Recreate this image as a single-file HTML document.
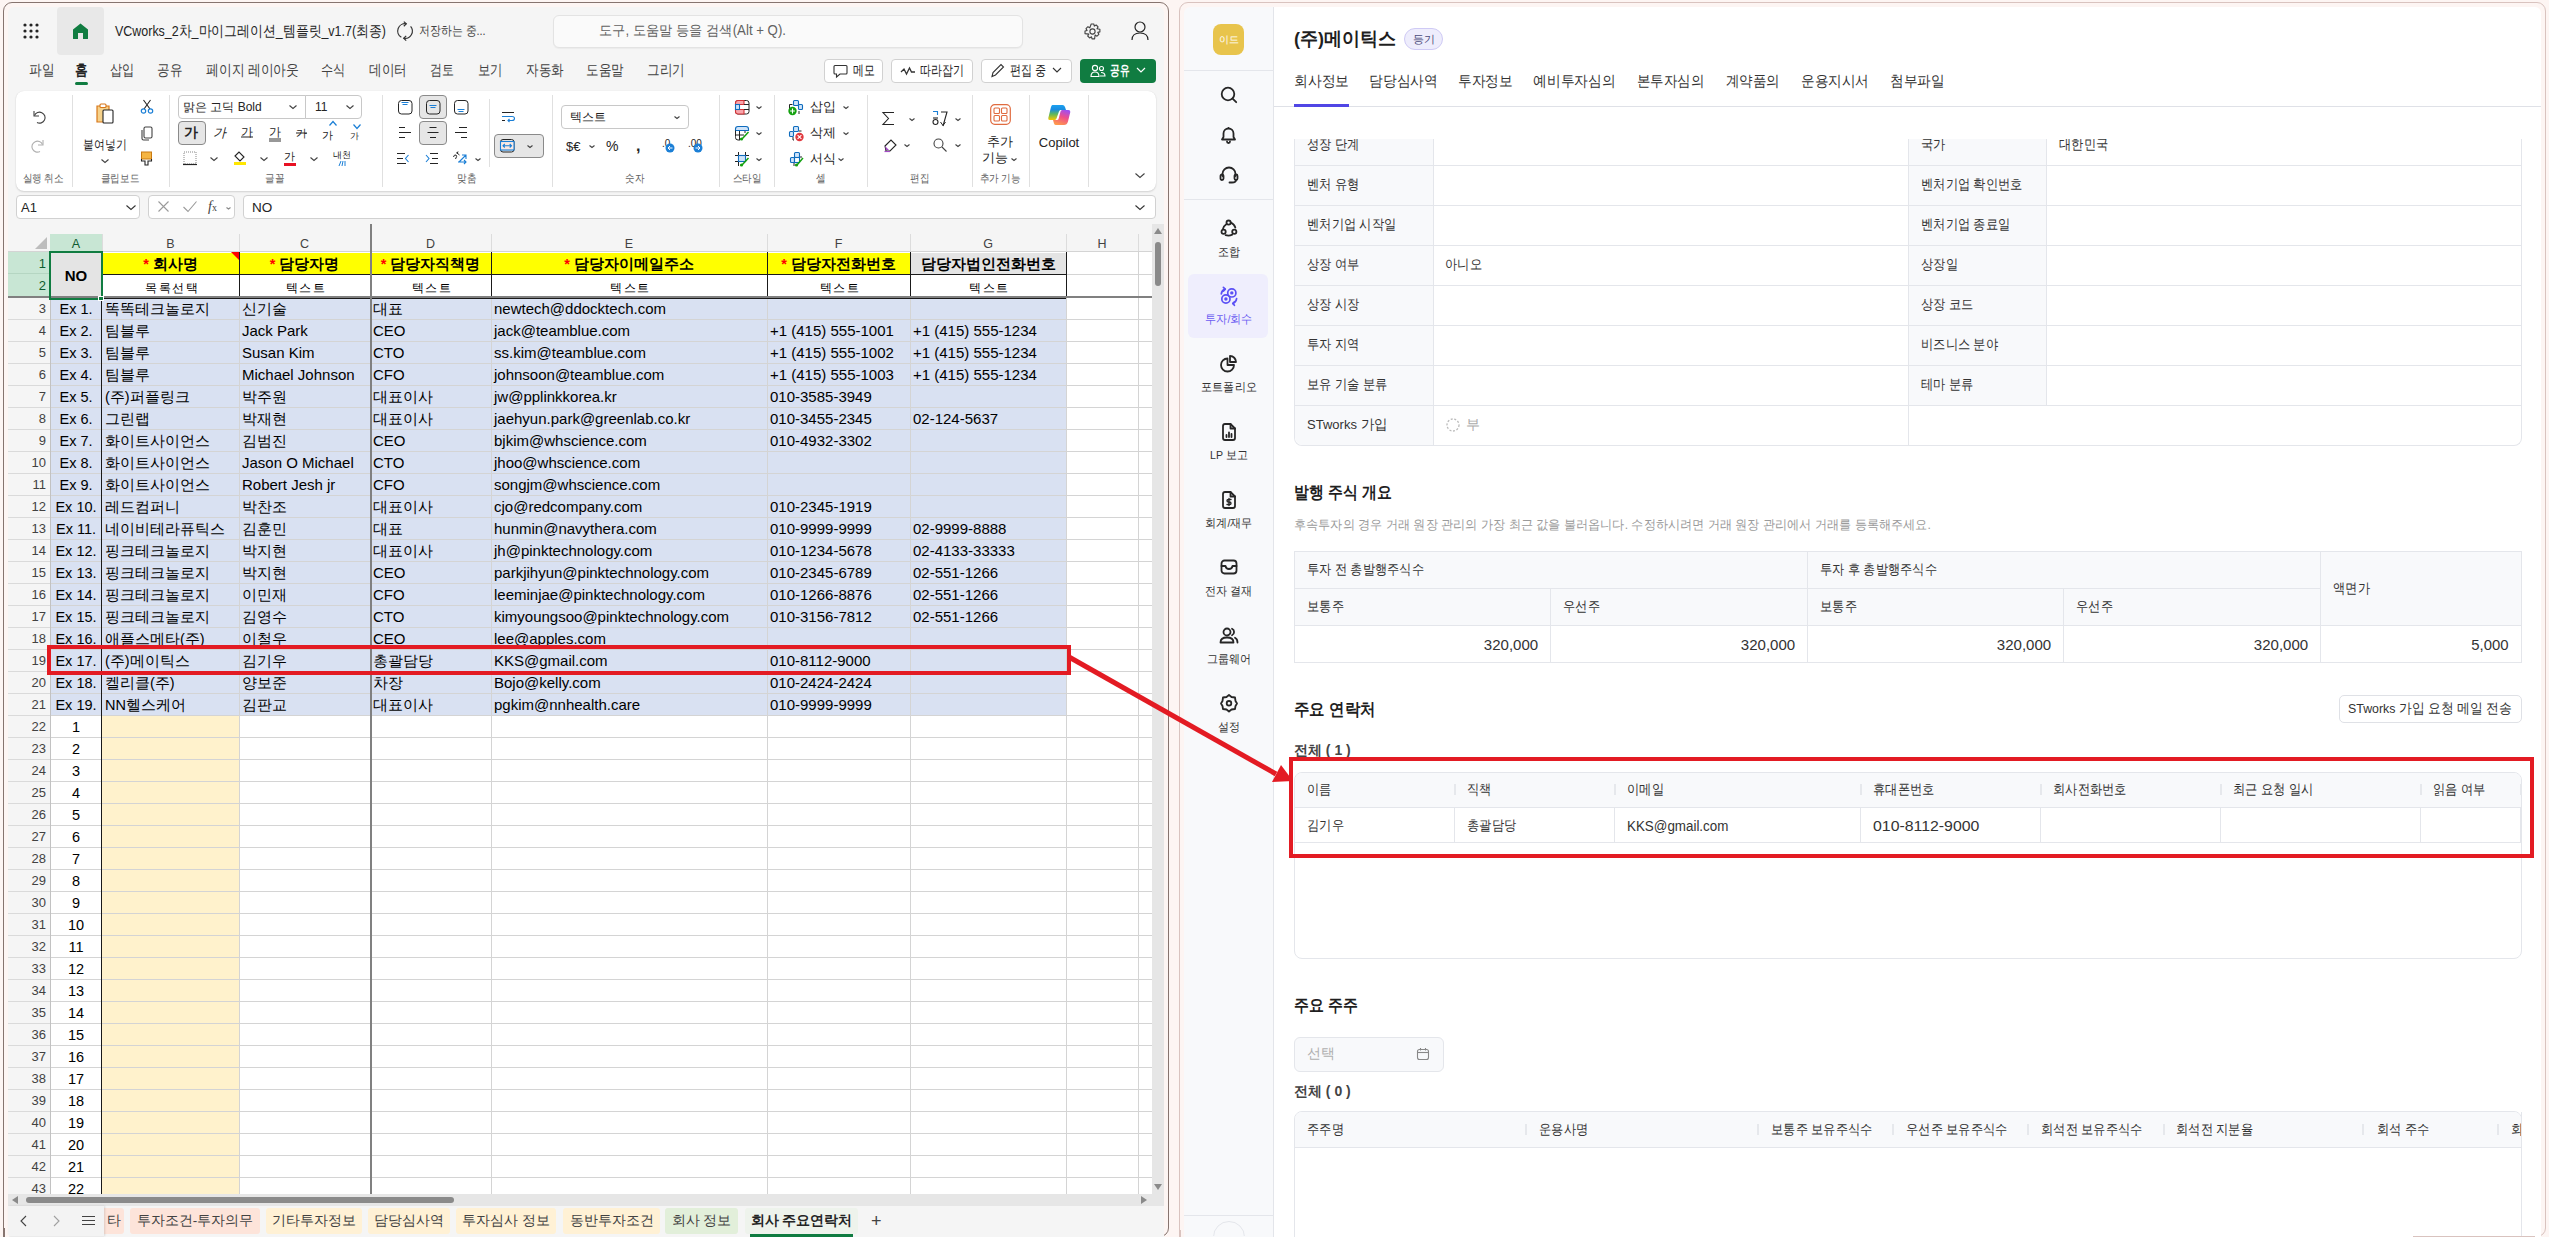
<!DOCTYPE html><html lang="ko"><head><meta charset="utf-8"><style>
*{box-sizing:border-box;margin:0;padding:0}
html,body{width:2549px;height:1237px;overflow:hidden;background:#fdf5f3;font-family:"Liberation Sans",sans-serif;color:#242424}
.a{position:absolute;white-space:nowrap}
svg{position:absolute;overflow:visible}
#rp{position:absolute;left:1179px;top:2px;width:1367px;height:1235px;border:1.5px solid #d9c3bf;border-radius:9px 9px 9px 0;background:#fdf5f3}
#side{position:absolute;left:1184px;top:7px;width:90px;height:1230px;background:#f8f9fb;border-right:1px solid #e3e5ea;border-top-left-radius:6px}
#main{position:absolute;left:1274px;top:7px;width:1267px;height:1230px;background:#fff;border-top-right-radius:6px}
.sl{font-size:11.5px;color:#333;line-height:14px;text-align:center;width:90px;left:1184px}
</style></head><body>
<div id="rp"></div><div id="side"></div><div id="main"></div>
<div class="a" style="left:1184px;top:70px;width:90px;height:1px;background:#e4e6eb"></div>
<div class="a" style="left:1184px;top:199px;width:90px;height:1px;background:#e4e6eb"></div>
<div class="a" style="left:1184px;top:1215px;width:90px;height:1px;background:#e4e6eb"></div>
<div class="a" style="left:1213px;top:24px;width:31px;height:31px;border-radius:8px;background:#e8c44c;color:#fff;font-size:10px;line-height:31px;text-align:center">이드</div>
<div class="a" style="left:1188px;top:274px;width:80px;height:64px;border-radius:6px;background:#efeefd"></div>
<div class="a sl" style="top:245px;color:#333;transform:scaleX(0.92)">조합</div>
<div class="a sl" style="top:312px;color:#6b5cf2;transform:scaleX(0.92)">투자/회수</div>
<div class="a sl" style="top:380px;color:#333;transform:scaleX(0.92)">포트폴리오</div>
<div class="a sl" style="top:448px;color:#333;transform:scaleX(0.92)">LP 보고</div>
<div class="a sl" style="top:516px;color:#333;transform:scaleX(0.92)">회계/재무</div>
<div class="a sl" style="top:584px;color:#333;transform:scaleX(0.92)">전자 결재</div>
<div class="a sl" style="top:652px;color:#333;transform:scaleX(0.92)">그룹웨어</div>
<div class="a sl" style="top:720px;color:#333;transform:scaleX(0.92)">설정</div>
<svg style="left:1220px;top:86px" width="18" height="18"><circle cx="8" cy="8" r="6.3" fill="none" stroke="#262626" stroke-width="1.8" stroke-linecap="round" stroke-linejoin="round"/><path d="M12.6 12.6 L16.2 16.2" fill="none" stroke="#262626" stroke-width="1.8" stroke-linecap="round" stroke-linejoin="round"/></svg>
<svg style="left:1220px;top:126px" width="18" height="18"><path d="M2 13.5 H15 L13.5 11 V7.5 A5 5 0 0 0 3.5 7.5 V11 Z" fill="none" stroke="#262626" stroke-width="1.8" stroke-linecap="round" stroke-linejoin="round"/><path d="M7 15.5 A1.5 1.5 0 0 0 10 15.5" fill="none" stroke="#262626" stroke-width="1.8" stroke-linecap="round" stroke-linejoin="round"/><circle cx="8.5" cy="2" r="0.9" fill="#262626"/></svg>
<svg style="left:1219px;top:166px" width="20" height="18"><path d="M3.5 10 V8 A6.5 6.5 0 0 1 16.5 8 V10" fill="none" stroke="#262626" stroke-width="1.8" stroke-linecap="round" stroke-linejoin="round"/><rect x="1.5" y="8.5" width="3" height="5.5" rx="1.5" fill="none" stroke="#262626" stroke-width="1.8" stroke-linecap="round" stroke-linejoin="round"/><rect x="15.5" y="8.5" width="3" height="5.5" rx="1.5" fill="none" stroke="#262626" stroke-width="1.8" stroke-linecap="round" stroke-linejoin="round"/><path d="M17 14 Q17 16.5 13 16.5 H10.5" fill="none" stroke="#262626" stroke-width="1.8" stroke-linecap="round" stroke-linejoin="round"/></svg>
<svg style="left:1220px;top:219px" width="18" height="18"><circle cx="8.6" cy="3.6" r="2.1" fill="none" stroke="#262626" stroke-width="1.8" stroke-linecap="round" stroke-linejoin="round"/><circle cx="3.6" cy="12.7" r="2.1" fill="none" stroke="#262626" stroke-width="1.8" stroke-linecap="round" stroke-linejoin="round"/><circle cx="14.3" cy="12.7" r="2.1" fill="none" stroke="#262626" stroke-width="1.8" stroke-linecap="round" stroke-linejoin="round"/><path d="M10.8 3.6 Q14.3 5 15.3 8.6" fill="none" stroke="#262626" stroke-width="1.8" stroke-linecap="round" stroke-linejoin="round"/><path d="M6.3 5.2 Q3.2 7.2 2.8 10.4" fill="none" stroke="#262626" stroke-width="1.8" stroke-linecap="round" stroke-linejoin="round"/><path d="M5.6 16.1 Q9 17.2 12.2 15.6" fill="none" stroke="#262626" stroke-width="1.8" stroke-linecap="round" stroke-linejoin="round"/></svg>
<svg style="left:1220px;top:287px" width="18" height="18"><g fill="none" stroke="#5b50f5" stroke-width="1.7" stroke-linecap="round" stroke-linejoin="round"><circle cx="11.8" cy="5.9" r="4.1"/><circle cx="5.9" cy="12" r="4.1"/><path d="M1.3 6.8 Q1.8 3 5 2"/><path d="M3.4 0.4 L5.3 2.1 L3.6 4"/><path d="M16.6 11.5 Q16.2 15.3 13 16.5"/><path d="M14.7 14.6 L12.8 16.4 L14.4 18.3"/></g><circle cx="11.8" cy="5.9" r="1.7" fill="#5b50f5"/><circle cx="5.9" cy="12" r="1.7" fill="#5b50f5"/></svg>
<svg style="left:1220px;top:355px" width="18" height="18"><path d="M7.5 3.5 A6.5 6.5 0 1 0 14 10 H7.5 Z" fill="none" stroke="#262626" stroke-width="1.8" stroke-linecap="round" stroke-linejoin="round"/><path d="M10 1 A6 6 0 0 1 16 7 H10 Z" fill="none" stroke="#262626" stroke-width="1.8" stroke-linecap="round" stroke-linejoin="round"/></svg>
<svg style="left:1221px;top:423px" width="16" height="18"><path d="M2 3 Q2 1 4 1 H9.5 L14 5.5 V15 Q14 17 12 17 H4 Q2 17 2 15 Z" fill="none" stroke="#262626" stroke-width="1.8" stroke-linecap="round" stroke-linejoin="round"/><path d="M9.5 1 V5.5 H14" fill="none" stroke="#262626" stroke-width="1.8" stroke-linecap="round" stroke-linejoin="round"/><path d="M5.5 14 V12 M8 14 V9.5 M10.5 14 V11" fill="none" stroke="#262626" stroke-width="1.8" stroke-linecap="round" stroke-linejoin="round"/></svg>
<svg style="left:1221px;top:491px" width="16" height="18"><path d="M2 3 Q2 1 4 1 H9.5 L14 5.5 V15 Q14 17 12 17 H4 Q2 17 2 15 Z" fill="none" stroke="#262626" stroke-width="1.8" stroke-linecap="round" stroke-linejoin="round"/><path d="M9.5 1 V5.5 H14" fill="none" stroke="#262626" stroke-width="1.8" stroke-linecap="round" stroke-linejoin="round"/><path d="M10 8.5 H7.3 Q6 8.5 6 9.7 Q6 11 7.5 11 H8.5 Q10 11 10 12.3 Q10 13.5 8.7 13.5 H6 M8 7.5 V14.5" fill="none" stroke="#262626" stroke-width="1.4" stroke-linecap="round"/></svg>
<svg style="left:1220px;top:559px" width="18" height="16"><rect x="1.5" y="1.5" width="15" height="13" rx="3" fill="none" stroke="#262626" stroke-width="1.8" stroke-linecap="round" stroke-linejoin="round"/><path d="M1.5 7 H5.5 Q6 10 9 10 Q12 10 12.5 7 H16.5" fill="none" stroke="#262626" stroke-width="1.8" stroke-linecap="round" stroke-linejoin="round"/></svg>
<svg style="left:1219px;top:627px" width="20" height="17"><circle cx="8" cy="5" r="3.5" fill="none" stroke="#262626" stroke-width="1.8" stroke-linecap="round" stroke-linejoin="round"/><path d="M1.5 15.5 Q1.5 10.5 8 10.5 Q14.5 10.5 14.5 15.5 Z" fill="none" stroke="#262626" stroke-width="1.8" stroke-linecap="round" stroke-linejoin="round"/><path d="M13 1.8 A3.5 3.5 0 0 1 13 8.2" fill="none" stroke="#262626" stroke-width="1.8" stroke-linecap="round" stroke-linejoin="round"/><path d="M16 10.8 Q18.5 12 18.5 15.5" fill="none" stroke="#262626" stroke-width="1.8" stroke-linecap="round" stroke-linejoin="round"/></svg>
<svg style="left:1220px;top:694px" width="18" height="18"><path d="M9 1 L11.5 3 L15 3.5 L15.5 7 L17 9.5 L15.5 12 L15 15 L11.5 15.5 L9 17.5 L6.5 15.5 L3 15 L2.5 12 L1 9.5 L2.5 7 L3 3.5 L6.5 3 Z" fill="none" stroke="#262626" stroke-width="1.8" stroke-linecap="round" stroke-linejoin="round"/><circle cx="9" cy="9.3" r="2.3" fill="none" stroke="#262626" stroke-width="1.8" stroke-linecap="round" stroke-linejoin="round"/></svg>
<div class="a" style="left:1184px;top:1216px;width:89px;height:20px;overflow:hidden"><div style="position:absolute;left:29px;top:5px;width:32px;height:32px;border-radius:50%;border:1px solid #e4e6eb"></div></div>
<div class="a " id="f041dad31" style="left:1294px;transform-origin:left center;top:39px;transform:translateY(-50%) scaleX(0.9475);font-size:19px;font-weight:bold;color:#1f1f1f">(주)메이틱스</div>
<div class="a" style="left:1404px;top:28px;width:39px;height:22px;border-radius:11px;border:1px solid #cfcaf5;background:#eeedfc;color:#4a4a7a;font-size:11px;line-height:20px;text-align:center">등기</div>
<div class="a " id="fa71fe4c8" style="left:1294px;transform-origin:left center;top:81px;transform:translateY(-50%) scaleX(0.9200);font-size:15px;color:#333">회사정보</div>
<div class="a " id="f661797a4" style="left:1369px;transform-origin:left center;top:81px;transform:translateY(-50%) scaleX(0.9173);font-size:15px;color:#333">담당심사역</div>
<div class="a " id="fbcfbae75" style="left:1458px;transform-origin:left center;top:81px;transform:translateY(-50%) scaleX(0.9150);font-size:15px;color:#333">투자정보</div>
<div class="a " id="f61f42e66" style="left:1533px;transform-origin:left center;top:81px;transform:translateY(-50%) scaleX(0.9167);font-size:15px;color:#333">예비투자심의</div>
<div class="a " id="ff23b93e3" style="left:1637px;transform-origin:left center;top:81px;transform:translateY(-50%) scaleX(0.8987);font-size:15px;color:#333">본투자심의</div>
<div class="a " id="fb19d3ecb" style="left:1726px;transform-origin:left center;top:81px;transform:translateY(-50%) scaleX(0.8983);font-size:15px;color:#333">계약품의</div>
<div class="a " id="fd5ef9275" style="left:1801px;transform-origin:left center;top:81px;transform:translateY(-50%) scaleX(0.9080);font-size:15px;color:#333">운용지시서</div>
<div class="a " id="f82c743bb" style="left:1890px;transform-origin:left center;top:81px;transform:translateY(-50%) scaleX(0.9100);font-size:15px;color:#333">첨부파일</div>
<div class="a" style="left:1274px;top:106px;width:1267px;height:1px;background:#dfe1e7"></div>
<div class="a" style="left:1294px;top:104px;width:55px;height:2.5px;background:#5046e5"></div>
<div class="a" style="left:1294px;top:139px;width:1228px;height:307px;border:1px solid #e4e6eb;border-top:none;border-radius:0 0 8px 8px"></div>
<div class="a" style="left:1295px;top:139px;width:138px;height:306px;background:#f8f9fb;border-bottom-left-radius:8px"></div>
<div class="a" style="left:1909px;top:139px;width:137px;height:266px;background:#f8f9fb"></div>
<div class="a" style="left:1295px;top:165px;width:1226px;height:1px;background:#e4e6eb"></div>
<div class="a" style="left:1295px;top:205px;width:1226px;height:1px;background:#e4e6eb"></div>
<div class="a" style="left:1295px;top:245px;width:1226px;height:1px;background:#e4e6eb"></div>
<div class="a" style="left:1295px;top:285px;width:1226px;height:1px;background:#e4e6eb"></div>
<div class="a" style="left:1295px;top:325px;width:1226px;height:1px;background:#e4e6eb"></div>
<div class="a" style="left:1295px;top:365px;width:1226px;height:1px;background:#e4e6eb"></div>
<div class="a" style="left:1295px;top:405px;width:1226px;height:1px;background:#e4e6eb"></div>
<div class="a" style="left:1433px;top:139px;width:1px;height:306px;background:#e4e6eb"></div>
<div class="a" style="left:1908px;top:139px;width:1px;height:306px;background:#e4e6eb"></div>
<div class="a" style="left:2046px;top:139px;width:1px;height:266px;background:#e4e6eb"></div>
<div class="a k93" style="left:1307px;transform-origin:left center;top:145px;transform:translateY(-50%) scaleX(0.875);font-size:13.5px;color:#333;line-height:16px">성장 단계</div>
<div class="a k93" style="left:1307px;transform-origin:left center;top:185px;transform:translateY(-50%) scaleX(0.875);font-size:13.5px;color:#333;line-height:16px">벤처 유형</div>
<div class="a k93" style="left:1307px;transform-origin:left center;top:225px;transform:translateY(-50%) scaleX(0.875);font-size:13.5px;color:#333;line-height:16px">벤처기업 시작일</div>
<div class="a k93" style="left:1307px;transform-origin:left center;top:265px;transform:translateY(-50%) scaleX(0.875);font-size:13.5px;color:#333;line-height:16px">상장 여부</div>
<div class="a k93" style="left:1307px;transform-origin:left center;top:305px;transform:translateY(-50%) scaleX(0.875);font-size:13.5px;color:#333;line-height:16px">상장 시장</div>
<div class="a k93" style="left:1307px;transform-origin:left center;top:345px;transform:translateY(-50%) scaleX(0.875);font-size:13.5px;color:#333;line-height:16px">투자 지역</div>
<div class="a k93" style="left:1307px;transform-origin:left center;top:385px;transform:translateY(-50%) scaleX(0.875);font-size:13.5px;color:#333;line-height:16px">보유 기술 분류</div>
<div class="a " id="fdf6b5f2c" style="left:1307px;transform-origin:left center;top:425px;transform:translateY(-50%) scaleX(0.9639);font-size:13.5px;color:#333;line-height:16px">STworks 가입</div>
<div class="a k93" style="left:1921px;transform-origin:left center;top:145px;transform:translateY(-50%) scaleX(0.875);font-size:13.5px;color:#333;line-height:16px">국가</div>
<div class="a k93" style="left:1921px;transform-origin:left center;top:185px;transform:translateY(-50%) scaleX(0.875);font-size:13.5px;color:#333;line-height:16px">벤처기업 확인번호</div>
<div class="a k93" style="left:1921px;transform-origin:left center;top:225px;transform:translateY(-50%) scaleX(0.875);font-size:13.5px;color:#333;line-height:16px">벤처기업 종료일</div>
<div class="a k93" style="left:1921px;transform-origin:left center;top:265px;transform:translateY(-50%) scaleX(0.875);font-size:13.5px;color:#333;line-height:16px">상장일</div>
<div class="a k93" style="left:1921px;transform-origin:left center;top:305px;transform:translateY(-50%) scaleX(0.875);font-size:13.5px;color:#333;line-height:16px">상장 코드</div>
<div class="a k93" style="left:1921px;transform-origin:left center;top:345px;transform:translateY(-50%) scaleX(0.875);font-size:13.5px;color:#333;line-height:16px">비즈니스 분야</div>
<div class="a k93" style="left:1921px;transform-origin:left center;top:385px;transform:translateY(-50%) scaleX(0.875);font-size:13.5px;color:#333;line-height:16px">테마 분류</div>
<div class="a k93" style="left:1445px;transform-origin:left center;top:265px;transform:translateY(-50%) scaleX(0.875);font-size:13.5px;color:#333;line-height:16px">아니오</div>
<div class="a k93" style="left:2059px;transform-origin:left center;top:145px;transform:translateY(-50%) scaleX(0.875);font-size:13.5px;color:#333;line-height:16px">대한민국</div>
<div class="a " style="left:1466px;transform-origin:left center;top:425px;transform:translateY(-50%);font-size:13.5px;color:#333;line-height:16px;color:#aaa">부</div>
<svg style="left:1446px;top:418px" width="14" height="14"><circle cx="7" cy="7" r="6" fill="none" stroke="#bbb" stroke-width="1.3" stroke-dasharray="2 1.6"/></svg>
<div class="a" style="left:1274px;top:107px;width:1267px;height:32px;background:#fff"></div>
<div class="a k93" style="left:1294px;transform-origin:left center;top:492px;transform:translateY(-50%) scaleX(0.875);font-size:17px;font-weight:bold;color:#1f1f1f">발행 주식 개요</div>
<div class="a " id="f7563afcb" style="left:1294px;transform-origin:left center;top:525px;transform:translateY(-50%) scaleX(0.9343);font-size:13px;color:#9a9a9a">후속투자의 경우 거래 원장 관리의 가장 최근 값을 불러옵니다. 수정하시려면 거래 원장 관리에서 거래를 등록해주세요.</div>
<div class="a" style="left:1294px;top:551px;width:1228px;height:112px;border:1px solid #e4e6eb"></div>
<div class="a" style="left:1295px;top:552px;width:1226px;height:73px;background:#f8f9fb"></div>
<div class="a" style="left:1295px;top:588px;width:1025px;height:1px;background:#e4e6eb"></div>
<div class="a" style="left:1295px;top:625px;width:1226px;height:1px;background:#e4e6eb"></div>
<div class="a" style="left:1550px;top:588px;width:1px;height:74px;background:#e4e6eb"></div>
<div class="a" style="left:2063px;top:588px;width:1px;height:74px;background:#e4e6eb"></div>
<div class="a" style="left:1807px;top:552px;width:1px;height:110px;background:#e4e6eb"></div>
<div class="a" style="left:2320px;top:552px;width:1px;height:110px;background:#e4e6eb"></div>
<div class="a k93" style="left:1307px;transform-origin:left center;top:570px;transform:translateY(-50%) scaleX(0.875);font-size:13.5px;color:#333;line-height:16px">투자 전 총발행주식수</div>
<div class="a k93" style="left:1820px;transform-origin:left center;top:570px;transform:translateY(-50%) scaleX(0.875);font-size:13.5px;color:#333;line-height:16px">투자 후 총발행주식수</div>
<div class="a k93" style="left:2333px;transform-origin:left center;top:589px;transform:translateY(-50%) scaleX(0.875);font-size:13.5px;color:#333;line-height:16px">액면가</div>
<div class="a k93" style="left:1307px;transform-origin:left center;top:607px;transform:translateY(-50%) scaleX(0.875);font-size:13.5px;color:#333;line-height:16px">보통주</div>
<div class="a k93" style="left:1563px;transform-origin:left center;top:607px;transform:translateY(-50%) scaleX(0.875);font-size:13.5px;color:#333;line-height:16px">우선주</div>
<div class="a k93" style="left:1820px;transform-origin:left center;top:607px;transform:translateY(-50%) scaleX(0.875);font-size:13.5px;color:#333;line-height:16px">보통주</div>
<div class="a k93" style="left:2076px;transform-origin:left center;top:607px;transform:translateY(-50%) scaleX(0.875);font-size:13.5px;color:#333;line-height:16px">우선주</div>
<div class="a " id="f77d30242" style="right:1011px;transform-origin:right center;top:644px;transform:translateY(-50%) scaleX(1.0031);font-size:15px;color:#333">320,000</div>
<div class="a " id="ff63d00ca" style="right:754px;transform-origin:right center;top:644px;transform:translateY(-50%) scaleX(1.0031);font-size:15px;color:#333">320,000</div>
<div class="a " id="f93da8a57" style="right:498px;transform-origin:right center;top:644px;transform:translateY(-50%) scaleX(1.0031);font-size:15px;color:#333">320,000</div>
<div class="a " id="f79fe5379" style="right:241px;transform-origin:right center;top:644px;transform:translateY(-50%) scaleX(1.0031);font-size:15px;color:#333">320,000</div>
<div class="a " id="f47bef97c" style="right:40px;transform-origin:right center;top:644px;transform:translateY(-50%) scaleX(0.9934);font-size:15px;color:#333">5,000</div>
<div class="a " id="ffb22c7c8" style="left:1294px;transform-origin:left center;top:709px;transform:translateY(-50%) scaleX(0.9094);font-size:17px;font-weight:bold;color:#1f1f1f">주요 연락처</div>
<div class="a" style="left:2339px;top:695px;width:183px;height:28px;border:1px solid #dfe1e6;border-radius:5px"></div>
<div class="a " id="f6c429939" style="left:2348px;transform-origin:left center;top:709px;transform:translateY(-50%) scaleX(0.9174);font-size:13.5px;color:#333">STworks 가입 요청 메일 전송</div>
<div class="a " id="fcde7750b" style="left:1294px;transform-origin:left center;top:751px;transform:translateY(-50%) scaleX(0.9986);font-size:14px;font-weight:bold;color:#444">전체 ( 1 )</div>
<div class="a" style="left:1294px;top:772px;width:1228px;height:187px;border:1px solid #e4e6eb;border-radius:8px;overflow:hidden"><div style="height:35px;background:#f8f9fb;border-bottom:1px solid #e4e6eb"></div><div style="height:35px;border-bottom:1px solid #e4e6eb"></div></div>
<div class="a" style="left:1454px;top:784px;width:2px;height:11px;background:#e6e8ec"></div>
<div class="a" style="left:1614px;top:784px;width:2px;height:11px;background:#e6e8ec"></div>
<div class="a" style="left:1860px;top:784px;width:2px;height:11px;background:#e6e8ec"></div>
<div class="a" style="left:2040px;top:784px;width:2px;height:11px;background:#e6e8ec"></div>
<div class="a" style="left:2220px;top:784px;width:2px;height:11px;background:#e6e8ec"></div>
<div class="a" style="left:2420px;top:784px;width:2px;height:11px;background:#e6e8ec"></div>
<div class="a" style="left:2520px;top:784px;width:2px;height:11px;background:#e6e8ec"></div>
<div class="a" style="left:1454px;top:808px;width:1px;height:34px;background:#e4e6eb"></div>
<div class="a" style="left:1614px;top:808px;width:1px;height:34px;background:#e4e6eb"></div>
<div class="a" style="left:1860px;top:808px;width:1px;height:34px;background:#e4e6eb"></div>
<div class="a" style="left:2040px;top:808px;width:1px;height:34px;background:#e4e6eb"></div>
<div class="a" style="left:2220px;top:808px;width:1px;height:34px;background:#e4e6eb"></div>
<div class="a" style="left:2420px;top:808px;width:1px;height:34px;background:#e4e6eb"></div>
<div class="a" style="left:2520px;top:808px;width:1px;height:34px;background:#e4e6eb"></div>
<div class="a k93" style="left:1307px;transform-origin:left center;top:790px;transform:translateY(-50%) scaleX(0.875);font-size:13.5px;color:#333;line-height:16px">이름</div>
<div class="a k93" style="left:1467px;transform-origin:left center;top:790px;transform:translateY(-50%) scaleX(0.875);font-size:13.5px;color:#333;line-height:16px">직책</div>
<div class="a k93" style="left:1627px;transform-origin:left center;top:790px;transform:translateY(-50%) scaleX(0.875);font-size:13.5px;color:#333;line-height:16px">이메일</div>
<div class="a k93" style="left:1873px;transform-origin:left center;top:790px;transform:translateY(-50%) scaleX(0.875);font-size:13.5px;color:#333;line-height:16px">휴대폰번호</div>
<div class="a k93" style="left:2053px;transform-origin:left center;top:790px;transform:translateY(-50%) scaleX(0.875);font-size:13.5px;color:#333;line-height:16px">회사전화번호</div>
<div class="a k93" style="left:2233px;transform-origin:left center;top:790px;transform:translateY(-50%) scaleX(0.875);font-size:13.5px;color:#333;line-height:16px">최근 요청 일시</div>
<div class="a k93" style="left:2433px;transform-origin:left center;top:790px;transform:translateY(-50%) scaleX(0.875);font-size:13.5px;color:#333;line-height:16px">읽음 여부</div>
<div class="a k93" style="left:1307px;transform-origin:left center;top:826px;transform:translateY(-50%) scaleX(0.875);font-size:13.5px;color:#333;line-height:16px">김기우</div>
<div class="a k93" style="left:1467px;transform-origin:left center;top:826px;transform:translateY(-50%) scaleX(0.875);font-size:13.5px;color:#333;line-height:16px">총괄담당</div>
<div class="a " id="f1f1d34e5" style="left:1627px;transform-origin:left center;top:826px;transform:translateY(-50%) scaleX(0.9563);font-size:14px;color:#333">KKS@gmail.com</div>
<div class="a " id="fdf6548bd" style="left:1873px;transform-origin:left center;top:826px;transform:translateY(-50%) scaleX(1.1327);font-size:14px;color:#333">010-8112-9000</div>
<div class="a k93" style="left:1294px;transform-origin:left center;top:1005px;transform:translateY(-50%) scaleX(0.875);font-size:17px;font-weight:bold;color:#1f1f1f">주요 주주</div>
<div class="a" style="left:1294px;top:1037px;width:150px;height:35px;border:1px solid #e4e6eb;border-radius:6px;background:#f8f9fb"></div>
<div class="a " style="left:1307px;transform-origin:left center;top:1054px;transform:translateY(-50%);font-size:13.5px;color:#333;line-height:16px;color:#b0b0b0">선택</div>
<svg style="left:1416px;top:1047px" width="14" height="14"><rect x="1.5" y="2.5" width="11" height="10" rx="2" fill="none" stroke="#888" stroke-width="1.1"/><line x1="1.5" y1="5.5" x2="12.5" y2="5.5" stroke="#888" stroke-width="1.1"/><line x1="4.5" y1="1" x2="4.5" y2="3.5" stroke="#888" stroke-width="1.1"/><line x1="9.5" y1="1" x2="9.5" y2="3.5" stroke="#888" stroke-width="1.1"/></svg>
<div class="a " id="fdb1e840e" style="left:1294px;transform-origin:left center;top:1092px;transform:translateY(-50%) scaleX(0.9986);font-size:14px;font-weight:bold;color:#444">전체 ( 0 )</div>
<div class="a" style="left:1294px;top:1111px;width:1228px;height:200px;border:1px solid #e4e6eb;border-radius:8px;overflow:hidden"><div style="height:36px;background:#f8f9fb;border-bottom:1px solid #e4e6eb"></div></div>
<div class="a" style="left:1525px;top:1124px;width:2px;height:11px;background:#e6e8ec"></div>
<div class="a" style="left:1757px;top:1124px;width:2px;height:11px;background:#e6e8ec"></div>
<div class="a" style="left:1892px;top:1124px;width:2px;height:11px;background:#e6e8ec"></div>
<div class="a" style="left:2027px;top:1124px;width:2px;height:11px;background:#e6e8ec"></div>
<div class="a" style="left:2163px;top:1124px;width:2px;height:11px;background:#e6e8ec"></div>
<div class="a" style="left:2362px;top:1124px;width:2px;height:11px;background:#e6e8ec"></div>
<div class="a" style="left:2497px;top:1124px;width:2px;height:11px;background:#e6e8ec"></div>
<div class="a k93" style="left:1307px;transform-origin:left center;top:1130px;transform:translateY(-50%) scaleX(0.875);font-size:13.5px;color:#333;line-height:16px">주주명</div>
<div class="a k93" style="left:1539px;transform-origin:left center;top:1130px;transform:translateY(-50%) scaleX(0.875);font-size:13.5px;color:#333;line-height:16px">운용사명</div>
<div class="a k93" style="left:1771px;transform-origin:left center;top:1130px;transform:translateY(-50%) scaleX(0.875);font-size:13.5px;color:#333;line-height:16px">보통주 보유주식수</div>
<div class="a k93" style="left:1906px;transform-origin:left center;top:1130px;transform:translateY(-50%) scaleX(0.875);font-size:13.5px;color:#333;line-height:16px">우선주 보유주식수</div>
<div class="a k93" style="left:2041px;transform-origin:left center;top:1130px;transform:translateY(-50%) scaleX(0.875);font-size:13.5px;color:#333;line-height:16px">회석전 보유주식수</div>
<div class="a k93" style="left:2176px;transform-origin:left center;top:1130px;transform:translateY(-50%) scaleX(0.875);font-size:13.5px;color:#333;line-height:16px">회석전 지분율</div>
<div class="a k93" style="left:2377px;transform-origin:left center;top:1130px;transform:translateY(-50%) scaleX(0.875);font-size:13.5px;color:#333;line-height:16px">회석 주수</div>
<div class="a k93" style="left:2511px;transform-origin:left center;top:1130px;transform:translateY(-50%) scaleX(0.875);font-size:13.5px;color:#333;line-height:16px">회</div>
<div class="a" style="left:2521px;top:1112px;width:20px;height:130px;background:#fff"></div>
<div class="a" style="left:2521px;top:1112px;width:1px;height:130px;background:#e4e6eb"></div>
<div class="a" style="left:1180px;top:1235px;width:4px;height:2px;background:#fdf5f3"></div>
<div class="a" style="left:1179px;top:1230px;width:1.5px;height:7px;background:#d9c3bf"></div>
<div class="a" style="left:2413px;top:1235.5px;width:122px;height:1.5px;background:#d9c3bf"></div>
<div class="a" style="left:3px;top:2px;width:1166px;height:1235px;border:1.5px solid #86746f;border-radius:9px 9px 9px 0;background:#fdf5f3"></div>
<div class="a" style="left:8px;top:7px;width:1156px;height:1230px;background:#f5f5f5;border-radius:6px 6px 0 0"></div>
<div class="a" style="left:57px;top:7px;width:47px;height:48px;background:#e8e8e8;border-radius:4px"></div>
<svg style="left:23px;top:23px" width="16" height="16"><circle cx="2" cy="2" r="1.6" fill="#242424"/><circle cx="2" cy="8" r="1.6" fill="#242424"/><circle cx="2" cy="14" r="1.6" fill="#242424"/><circle cx="8" cy="2" r="1.6" fill="#242424"/><circle cx="8" cy="8" r="1.6" fill="#242424"/><circle cx="8" cy="14" r="1.6" fill="#242424"/><circle cx="14" cy="2" r="1.6" fill="#242424"/><circle cx="14" cy="8" r="1.6" fill="#242424"/><circle cx="14" cy="14" r="1.6" fill="#242424"/></svg>
<svg style="left:72px;top:23px" width="17" height="17"><path d="M8.5 0.5 L16 6.5 V15.5 Q16 16 15.5 16 H11 V10 H6 V16 H1.5 Q1 16 1 15.5 V6.5 Z" fill="#107c41"/></svg>
<div class="a " id="f45bd38cd" style="left:115px;transform-origin:left center;top:31px;transform:translateY(-50%) scaleX(0.8592);font-size:14.5px;color:#242424">VCworks_2차_마이그레이션_템플릿_v1.7(최종)</div>
<svg style="left:397px;top:21px" width="16" height="21"><path d="M9.3 2.8 A7.3 7.3 0 0 0 4.35 16.3" fill="none" stroke="#333" stroke-width="1.2"/><path d="M6.8 0.6 L9.3 2.8 L6.8 5.2" fill="none" stroke="#333" stroke-width="1.2"/><path d="M13.6 5.3 A7.3 7.3 0 0 1 6.7 17.2" fill="none" stroke="#333" stroke-width="1.2"/><path d="M9.2 14.9 L6.7 17.2 L9.2 19.6" fill="none" stroke="#333" stroke-width="1.2"/></svg>
<div class="a " id="f483e0df1" style="left:419px;transform-origin:left center;top:31px;transform:translateY(-50%) scaleX(0.8370);font-size:13px;color:#424242">저장하는 중...</div>
<div class="a" style="left:553px;top:15px;width:470px;height:33px;background:#fafafa;border:1px solid #e3e3e3;border-radius:6px;box-shadow:0 1px 1px rgba(0,0,0,.04)"></div>
<div class="a " id="fd4ec01e3" style="left:599px;transform-origin:left center;top:31px;transform:translateY(-50%) scaleX(0.9446);font-size:14px;color:#616161">도구, 도움말 등을 검색(Alt + Q).</div>
<svg style="left:1084px;top:23px" width="17" height="17"><circle cx="8.5" cy="8.5" r="2.6" fill="none" stroke="#424242" stroke-width="1.1"/><path d="M7.2 1 H9.8 L10.3 3.1 L12.2 2 L14.1 3.9 L13 5.8 L15.9 6.3 V8.9 L13.8 9.4 L14.9 11.3 L13 13.2 L11.1 12.1 L10.6 15.9 H8 L7.5 13.8 L5.6 14.9 L3.7 13 L4.8 11.1 L1 10.6 V8 L3.1 7.5 L2 5.6 L3.9 3.7 L5.8 4.8 Z" fill="none" stroke="#424242" stroke-width="1.1" stroke-linejoin="round"/></svg>
<svg style="left:1131px;top:21px" width="18" height="20"><circle cx="9" cy="6" r="5" fill="none" stroke="#242424" stroke-width="1.2"/><path d="M1 19 Q1 12 9 12 Q17 12 17 19" fill="none" stroke="#242424" stroke-width="1.2"/></svg>
<div class="a " id="f9f078541" style="left:28.7px;transform-origin:left center;top:70px;transform:translateY(-50%) scaleX(0.8467);font-size:14.5px;color:#424242">파일</div>
<div class="a " id="fbc78ebec" style="left:74.9px;transform-origin:left center;top:70px;transform:translateY(-50%) scaleX(0.8467);font-size:14.5px;color:#242424;font-weight:bold">홈</div>
<div class="a " id="f3f946006" style="left:110.2px;transform-origin:left center;top:70px;transform:translateY(-50%) scaleX(0.8133);font-size:14.5px;color:#424242">삽입</div>
<div class="a " id="f602f6fad" style="left:157.3px;transform-origin:left center;top:70px;transform:translateY(-50%) scaleX(0.8367);font-size:14.5px;color:#424242">공유</div>
<div class="a " id="f71a8b27a" style="left:205.5px;transform-origin:left center;top:70px;transform:translateY(-50%) scaleX(0.8530);font-size:14.5px;color:#424242">페이지 레이아웃</div>
<div class="a " id="f216a9ae3" style="left:321.3px;transform-origin:left center;top:70px;transform:translateY(-50%) scaleX(0.8100);font-size:14.5px;color:#424242">수식</div>
<div class="a " id="ffa6e5792" style="left:369px;transform-origin:left center;top:70px;transform:translateY(-50%) scaleX(0.8400);font-size:14.5px;color:#424242">데이터</div>
<div class="a " id="f4f97f0a2" style="left:430.3px;transform-origin:left center;top:70px;transform:translateY(-50%) scaleX(0.8000);font-size:14.5px;color:#424242">검토</div>
<div class="a " id="f2f3b3ecf" style="left:477.9px;transform-origin:left center;top:70px;transform:translateY(-50%) scaleX(0.8233);font-size:14.5px;color:#424242">보기</div>
<div class="a " id="f9d4cee0c" style="left:525.7px;transform-origin:left center;top:70px;transform:translateY(-50%) scaleX(0.8356);font-size:14.5px;color:#424242">자동화</div>
<div class="a " id="f5f3faf18" style="left:585.9px;transform-origin:left center;top:70px;transform:translateY(-50%) scaleX(0.8356);font-size:14.5px;color:#424242">도움말</div>
<div class="a " id="f3bba4043" style="left:647px;transform-origin:left center;top:70px;transform:translateY(-50%) scaleX(0.8400);font-size:14.5px;color:#424242">그리기</div>
<div class="a" style="left:75px;top:82px;width:13px;height:3px;background:#107c41;border-radius:2px"></div>
<div class="a" style="left:824px;top:59px;width:59px;height:24px;background:#fff;border:1px solid #d1d1d1;border-radius:4px"></div>
<svg style="left:833px;top:64px" width="15" height="14"><path d="M2 1.5 H13 Q14 1.5 14 2.5 V9 Q14 10 13 10 H7 L3.5 13 V10 H2 Q1 10 1 9 V2.5 Q1 1.5 2 1.5 Z" fill="none" stroke="#333" stroke-width="1.1"/></svg>
<div class="a " id="fb2c1772b" style="left:852.6px;transform-origin:left center;top:71px;transform:translateY(-50%) scaleX(0.7750);font-size:13.5px;color:#242424">메모</div>
<div class="a" style="left:891px;top:59px;width:82px;height:24px;background:#fff;border:1px solid #d1d1d1;border-radius:4px"></div>
<svg style="left:900px;top:66px" width="16" height="10"><path d="M1 6 L4 3 L6.5 8 L9.5 2 L11.5 6 H15" fill="none" stroke="#333" stroke-width="1.3"/></svg>
<div class="a " id="f3984aea5" style="left:920.2px;transform-origin:left center;top:71px;transform:translateY(-50%) scaleX(0.7857);font-size:13.5px;color:#242424">따라잡기</div>
<div class="a" style="left:981px;top:59px;width:91px;height:24px;background:#fff;border:1px solid #d1d1d1;border-radius:4px"></div>
<svg style="left:990px;top:63px" width="15" height="15"><path d="M2 13.5 L3 9.5 L11 1.5 L13.5 4 L5.5 12 Z" fill="none" stroke="#333" stroke-width="1.1"/></svg>
<div class="a " id="fddf688cd" style="left:1010.3px;transform-origin:left center;top:71px;transform:translateY(-50%) scaleX(0.7932);font-size:13.5px;color:#242424">편집 중</div>
<svg style="left:1052px;top:67px" width="10" height="7"><path d="M1 1 L5 5 L9 1" fill="none" stroke="#333" stroke-width="1.1"/></svg>
<div class="a" style="left:1080px;top:59px;width:76px;height:24px;background:#107c41;border-radius:4px"></div>
<svg style="left:1090px;top:64px" width="16" height="14"><circle cx="5" cy="4" r="2.6" fill="none" stroke="#fff" stroke-width="1.1"/><path d="M1 12.5 Q1 8 5 8 Q9 8 9 12.5 Z" fill="none" stroke="#fff" stroke-width="1.1"/><circle cx="11.5" cy="4.5" r="2" fill="none" stroke="#fff" stroke-width="1.1"/><path d="M11 8.5 Q15 8.5 15 12 H10" fill="none" stroke="#fff" stroke-width="1.1"/></svg>
<div class="a " id="f78aa3488" style="left:1109.7px;transform-origin:left center;top:71px;transform:translateY(-50%) scaleX(0.6893);font-size:13.5px;color:#fff;font-weight:bold">공유</div>
<svg style="left:1136px;top:67px" width="10" height="7"><path d="M1 1 L5 5 L9 1" fill="none" stroke="#fff" stroke-width="1.2"/></svg>
<div class="a" style="left:16px;top:91px;width:1140px;height:100px;background:#fff;border-radius:8px;box-shadow:0 1px 2px rgba(0,0,0,.14),0 0 1px rgba(0,0,0,.1)"></div>
<div class="a" style="left:72px;top:95px;width:1px;height:92px;background:#e0e0e0"></div>
<div class="a" style="left:169px;top:95px;width:1px;height:92px;background:#e0e0e0"></div>
<div class="a" style="left:382px;top:95px;width:1px;height:92px;background:#e0e0e0"></div>
<div class="a" style="left:552px;top:95px;width:1px;height:92px;background:#e0e0e0"></div>
<div class="a" style="left:719px;top:95px;width:1px;height:92px;background:#e0e0e0"></div>
<div class="a" style="left:774px;top:95px;width:1px;height:92px;background:#e0e0e0"></div>
<div class="a" style="left:867px;top:95px;width:1px;height:92px;background:#e0e0e0"></div>
<div class="a" style="left:972px;top:95px;width:1px;height:92px;background:#e0e0e0"></div>
<div class="a" style="left:1029px;top:95px;width:1px;height:92px;background:#e0e0e0"></div>
<div class="a" style="left:1088px;top:95px;width:1px;height:92px;background:#e0e0e0"></div>
<div class="a" style="left:489px;top:99px;width:1px;height:68px;background:#e0e0e0"></div>
<div class="a" style="left:3px;width:80px;top:171px;text-align:center;font-size:10.5px;color:#616161;line-height:14px;transform:scaleX(0.87)">실행 취소</div>
<div class="a" style="left:80px;width:80px;top:171px;text-align:center;font-size:10.5px;color:#616161;line-height:14px;transform:scaleX(0.87)">클립보드</div>
<div class="a" style="left:235px;width:80px;top:171px;text-align:center;font-size:10.5px;color:#616161;line-height:14px;transform:scaleX(0.87)">글꼴</div>
<div class="a" style="left:427px;width:80px;top:171px;text-align:center;font-size:10.5px;color:#616161;line-height:14px;transform:scaleX(0.87)">맞춤</div>
<div class="a" style="left:595px;width:80px;top:171px;text-align:center;font-size:10.5px;color:#616161;line-height:14px;transform:scaleX(0.87)">숫자</div>
<div class="a" style="left:707px;width:80px;top:171px;text-align:center;font-size:10.5px;color:#616161;line-height:14px;transform:scaleX(0.87)">스타일</div>
<div class="a" style="left:781px;width:80px;top:171px;text-align:center;font-size:10.5px;color:#616161;line-height:14px;transform:scaleX(0.87)">셀</div>
<div class="a" style="left:880px;width:80px;top:171px;text-align:center;font-size:10.5px;color:#616161;line-height:14px;transform:scaleX(0.87)">편집</div>
<div class="a" style="left:960px;width:80px;top:171px;text-align:center;font-size:10.5px;color:#616161;line-height:14px;transform:scaleX(0.87)">추가 기능</div>
<svg style="left:31px;top:109px" width="15" height="15"><path d="M3 2 V7 H8" stroke="#424242" stroke-width="1.1" fill="none"/><path d="M3.5 6.5 A5.5 5.5 0 1 1 6 13.5" stroke="#424242" stroke-width="1.1" fill="none"/></svg>
<svg style="left:31px;top:138px" width="15" height="15"><path d="M12 2 V7 H7" stroke="#b0b0b0" stroke-width="1.1" fill="none"/><path d="M11.5 6.5 A5.5 5.5 0 1 0 9 13.5" stroke="#b0b0b0" stroke-width="1.1" fill="none"/></svg>
<svg style="left:95px;top:103px" width="20" height="21"><path d="M2 3 H14 V19 H2 Z" fill="#f6d28b" stroke="#d8771a" stroke-width="1.2"/><rect x="5" y="1" width="6" height="3.5" rx="1" fill="#fff" stroke="#d8771a" stroke-width="1.1"/><rect x="8" y="7" width="10" height="13" rx="1" fill="#fff" stroke="#242424" stroke-width="1.1"/></svg>
<div class="a " id="f9ba2ad17" style="left:82.7px;transform-origin:left center;top:145px;transform:translateY(-50%) scaleX(0.8385);font-size:12.5px;color:#242424">붙여넣기</div>
<svg style="left:101px;top:159.0px" width="8" height="5"><path d="M0.5 0.5 L4 3.5 L7.5 0.5" fill="none" stroke="#424242" stroke-width="1.1"/></svg>
<svg style="left:140px;top:99px" width="14" height="15"><path d="M3.5 1 L10 10 M10.5 1 L4 10" stroke="#242424" stroke-width="1.1"/><circle cx="3.5" cy="12" r="2.2" fill="none" stroke="#1b7fd6" stroke-width="1.2"/><circle cx="10.5" cy="12" r="2.2" fill="none" stroke="#1b7fd6" stroke-width="1.2"/></svg>
<svg style="left:140px;top:126px" width="13" height="15"><rect x="4" y="1" width="8" height="11" rx="1.5" stroke="#424242" stroke-width="1.1" fill="none"/><path d="M2 4 V12.5 Q2 14 3.5 14 H9" stroke="#424242" stroke-width="1.1" fill="none"/></svg>
<svg style="left:140px;top:151px" width="13" height="15"><rect x="1.5" y="1" width="10" height="7" fill="#f5b544" stroke="#c97a12" stroke-width="1"/><path d="M1.5 8 V10 H5 V14 H8 V10 H11.5 V8" fill="none" stroke="#242424" stroke-width="1.1"/></svg>
<div class="a" style="left:178px;top:95px;width:128px;height:24px;border:1px solid #c8c8c8;border-radius:4px 0 0 4px;background:#fff"></div>
<div class="a" style="left:305px;top:95px;width:57px;height:24px;border:1px solid #c8c8c8;border-radius:0 4px 4px 0;background:#fff"></div>
<div class="a " style="left:183px;transform-origin:left center;top:107px;transform:translateY(-50%);font-size:12px;color:#242424">맑은 고딕 Bold</div>
<svg style="left:289px;top:105.0px" width="8" height="5"><path d="M0.5 0.5 L4 3.5 L7.5 0.5" fill="none" stroke="#424242" stroke-width="1.1"/></svg>
<div class="a " style="left:315px;transform-origin:left center;top:107px;transform:translateY(-50%);font-size:12px;color:#242424">11</div>
<svg style="left:346px;top:105.0px" width="8" height="5"><path d="M0.5 0.5 L4 3.5 L7.5 0.5" fill="none" stroke="#424242" stroke-width="1.1"/></svg>
<div class="a" style="left:178px;top:121px;width:28px;height:24px;background:#e6e6e6;border:1px solid #8a8a8a;border-radius:4px"></div>
<div class="a " style="left:184px;transform-origin:left center;top:133px;transform:translateY(-50%);font-size:14px;font-weight:bold;color:#242424">가</div>
<div class="a " style="left:213px;transform-origin:left center;top:133px;transform:translateY(-50%);font-size:13px;color:#242424"><i>가</i></div>
<div class="a " style="left:241px;transform-origin:left center;top:132px;transform:translateY(-50%);font-size:12px;color:#242424"><u>가</u></div>
<div class="a " style="left:269px;transform-origin:left center;top:132px;transform:translateY(-50%);font-size:12px;color:#242424"><span style="border-bottom:3px double #333">가</span></div>
<div class="a " style="left:296px;transform-origin:left center;top:133px;transform:translateY(-50%);font-size:11px;color:#242424"><s>가</s></div>
<div class="a " style="left:322px;transform-origin:left center;top:135px;transform:translateY(-50%);font-size:11px;color:#242424">가</div>
<svg style="left:329px;top:121px" width="8" height="5"><path d="M0.5 4.5 L4 0.5 L7.5 4.5" fill="none" stroke="#1b7fd6" stroke-width="1.2"/></svg>
<div class="a " style="left:350px;transform-origin:left center;top:136px;transform:translateY(-50%);font-size:9px;color:#242424">가</div>
<svg style="left:353px;top:124px" width="8" height="5"><path d="M0.5 0.5 L4 4.5 L7.5 0.5" fill="none" stroke="#1b7fd6" stroke-width="1.2"/></svg>
<svg style="left:183px;top:151px" width="14" height="14"><rect x="1" y="1" width="12" height="12" fill="none" stroke="#888" stroke-width="1" stroke-dasharray="1 1"/><line x1="0" y1="13.5" x2="14" y2="13.5" stroke="#242424" stroke-width="1.2"/></svg>
<svg style="left:210px;top:157.0px" width="8" height="5"><path d="M0.5 0.5 L4 3.5 L7.5 0.5" fill="none" stroke="#424242" stroke-width="1.1"/></svg>
<svg style="left:233px;top:150px" width="14" height="16"><path d="M2 6 L6 2 L11 7 L7 11 Z" fill="none" stroke="#242424" stroke-width="1.1"/><rect x="1" y="12" width="12" height="3" fill="#ffe600"/></svg>
<svg style="left:260px;top:157.0px" width="8" height="5"><path d="M0.5 0.5 L4 3.5 L7.5 0.5" fill="none" stroke="#424242" stroke-width="1.1"/></svg>
<div class="a " style="left:284px;transform-origin:left center;top:156px;transform:translateY(-50%);font-size:11px;color:#242424">가</div>
<div class="a" style="left:284px;top:163px;width:12px;height:3px;background:#e81123"></div>
<svg style="left:310px;top:157.0px" width="8" height="5"><path d="M0.5 0.5 L4 3.5 L7.5 0.5" fill="none" stroke="#424242" stroke-width="1.1"/></svg>
<div class="a " style="left:333px;transform-origin:left center;top:155px;transform:translateY(-50%);font-size:9px;color:#242424">내천</div>
<svg style="left:338px;top:160px" width="9" height="7"><path d="M1 6 L3 1 M4 6 L5 1 M7 6 L7 1" stroke="#1b7fd6" stroke-width="1"/></svg>
<div class="a" style="left:419px;top:95px;width:28px;height:24px;background:#e6e6e6;border:1px solid #8a8a8a;border-radius:4px"></div>
<div class="a" style="left:419px;top:121px;width:28px;height:24px;background:#e6e6e6;border:1px solid #8a8a8a;border-radius:4px"></div>
<svg style="left:398px;top:100px" width="15" height="15"><rect x="0.5" y="0.5" width="13.5" height="13.5" rx="3" fill="none" stroke="#242424" stroke-width="1"/><line x1="3.5" y1="2.5" x2="10.5" y2="2.5" stroke="#1b7fd6" stroke-width="1"/><line x1="4.5" y1="4.5" x2="9.5" y2="4.5" stroke="#1b7fd6" stroke-width="1"/></svg>
<svg style="left:426px;top:100px" width="15" height="15"><rect x="0.5" y="0.5" width="13.5" height="13.5" rx="3" fill="none" stroke="#242424" stroke-width="1"/><line x1="3.5" y1="5.5" x2="10.5" y2="5.5" stroke="#1b7fd6" stroke-width="1"/><line x1="4.5" y1="7.5" x2="9.5" y2="7.5" stroke="#1b7fd6" stroke-width="1"/></svg>
<svg style="left:454px;top:100px" width="15" height="15"><rect x="0.5" y="0.5" width="13.5" height="13.5" rx="3" fill="none" stroke="#242424" stroke-width="1"/><line x1="3.5" y1="9.5" x2="10.5" y2="9.5" stroke="#1b7fd6" stroke-width="1"/><line x1="4.5" y1="11.5" x2="9.5" y2="11.5" stroke="#1b7fd6" stroke-width="1"/></svg>
<svg style="left:398px;top:126px" width="14" height="13"><path d="M1 1.5 H7 M1 6.5 H13 M1 11.5 H7" stroke="#242424" stroke-width="1" fill="none"/></svg>
<svg style="left:426px;top:126px" width="14" height="13"><path d="M3.5 1.5 H10.5 M1.5 6.5 H12.5 M4 11.5 H10" stroke="#242424" stroke-width="1" fill="none"/></svg>
<svg style="left:454px;top:126px" width="14" height="13"><path d="M5 1.5 H13 M1 6.5 H13 M7 11.5 H13" stroke="#242424" stroke-width="1" fill="none"/></svg>
<svg style="left:397px;top:152px" width="16" height="13"><path d="M0 1.5 H8 M0 6.5 H6 M0 11.5 H9" stroke="#242424" stroke-width="1"/><path d="M11.5 3 L8.5 6.5 L11.5 10" fill="none" stroke="#1b7fd6" stroke-width="1.1"/></svg>
<svg style="left:425px;top:152px" width="16" height="13"><path d="M1 3 L4 6.5 L1 10" fill="none" stroke="#1b7fd6" stroke-width="1.1"/><path d="M5 1.5 H13 M7 6.5 H13 M5 11.5 H13" stroke="#242424" stroke-width="1"/></svg>
<svg style="left:453px;top:151px" width="15" height="16"><path d="M0.5 6 Q1 3.5 3 4 Q4.5 5 2.5 8 M3.5 1.5 L6.5 4 M5 0.5 L4 3" fill="none" stroke="#242424" stroke-width="1"/><path d="M6 11 L13 4 M9 4 H13 V8 M5 11 H13 M11 9 L13 11 L11 13" fill="none" stroke="#1b7fd6" stroke-width="1.1"/></svg>
<svg style="left:475px;top:157.5px" width="6" height="4"><path d="M0.5 0.5 L3 2.5 L5.5 0.5" fill="none" stroke="#424242" stroke-width="1.1"/></svg>
<svg style="left:501px;top:111px" width="15" height="12"><path d="M1 1.5 H13 M1 9.5 H4" stroke="#242424" stroke-width="1"/><path d="M1 5.5 H11 Q13.5 5.5 13.5 7.5 Q13.5 9.5 11 9.5 H7 M8.5 8 L7 9.5 L8.5 11" fill="none" stroke="#1b7fd6" stroke-width="1.1"/></svg>
<div class="a" style="left:494px;top:134px;width:50px;height:24px;background:#e6e6e6;border:1px solid #8a8a8a;border-radius:4px"></div>
<svg style="left:500px;top:139px" width="15" height="14"><rect x="0.5" y="0.5" width="13.5" height="12.5" rx="2.5" fill="none" stroke="#242424" stroke-width="1"/><rect x="0.5" y="2.5" width="13.5" height="8.5" fill="#fbe9e2" stroke="#1b7fd6" stroke-width="1.1"/><path d="M3 6.75 H11.5 M4.8 5 L3 6.75 L4.8 8.5 M9.7 5 L11.5 6.75 L9.7 8.5" fill="none" stroke="#1b7fd6" stroke-width="1.1"/></svg>
<svg style="left:527px;top:144.5px" width="6" height="4"><path d="M0.5 0.5 L3 2.5 L5.5 0.5" fill="none" stroke="#424242" stroke-width="1.1"/></svg>
<div class="a" style="left:561px;top:105px;width:128px;height:24px;border:1px solid #c8c8c8;border-radius:4px;background:#fff"></div>
<div class="a " style="left:570px;transform-origin:left center;top:117px;transform:translateY(-50%);font-size:12px;color:#242424">텍스트</div>
<svg style="left:674px;top:115.5px" width="6" height="4"><path d="M0.5 0.5 L3 2.5 L5.5 0.5" fill="none" stroke="#424242" stroke-width="1.1"/></svg>
<div class="a " style="left:566px;transform-origin:left center;top:146px;transform:translateY(-50%);font-size:13px;color:#242424">$€</div>
<svg style="left:589px;top:144.5px" width="6" height="4"><path d="M0.5 0.5 L3 2.5 L5.5 0.5" fill="none" stroke="#424242" stroke-width="1.1"/></svg>
<div class="a " style="left:606px;transform-origin:left center;top:146px;transform:translateY(-50%);font-size:14px;color:#242424">%</div>
<div class="a " style="left:636px;transform-origin:left center;top:146px;transform:translateY(-50%);font-size:16px;color:#242424"><b>,</b></div>
<div class="a " style="left:662px;transform-origin:left center;top:143px;transform:translateY(-50%);font-size:10px;color:#242424">.0</div>
<svg style="left:665px;top:143px" width="10" height="10"><circle cx="5" cy="5" r="4.5" fill="#1b7fd6"/><path d="M7.5 5 H3 M5 3 L3 5 L5 7" fill="none" stroke="#fff" stroke-width="1"/></svg>
<div class="a " style="left:688px;transform-origin:left center;top:143px;transform:translateY(-50%);font-size:10px;color:#242424">.00</div>
<svg style="left:693px;top:143px" width="10" height="10"><circle cx="5" cy="5" r="4.5" fill="#1b7fd6"/><path d="M2.5 5 H7 M5 3 L7 5 L5 7" fill="none" stroke="#fff" stroke-width="1"/></svg>
<svg style="left:735px;top:100px" width="15" height="15"><rect x="0.5" y="0.5" width="13.5" height="13.5" rx="2.5" fill="none" stroke="#242424" stroke-width="1"/><path d="M3 0.5 H9 V4.5 H0.5 V3 Q0.5 0.5 3 0.5 Z" fill="#f8a5ab" stroke="#d13438" stroke-width="1.1"/><path d="M0.5 9.5 H9 V14 H3 Q0.5 14 0.5 11.5 Z" fill="#f8a5ab" stroke="#d13438" stroke-width="1.1"/><rect x="0.5" y="4.5" width="4" height="5" fill="#cfe4fa" stroke="#0f6cbd" stroke-width="1.1"/><path d="M9 4.5 H14 M9 9.5 H14" stroke="#242424" stroke-width="1"/></svg>
<svg style="left:735px;top:126px" width="15" height="15"><path d="M0.5 10.5 V11.5 Q0.5 14 3 14 H5 M4.5 4.5 V14 M0.5 9 H9 M10 4.5 V7" fill="none" stroke="#242424" stroke-width="1"/><path d="M0.5 4.5 V3 Q0.5 0.5 3 0.5 H11 Q13.5 0.5 13.5 3 V4.5 Z" fill="#cfe4fa" stroke="#0f6cbd" stroke-width="1.1"/><path d="M0.5 4.5 V10.5" stroke="#242424" stroke-width="1"/><path d="M7 13 L13.5 6" stroke="#13a10e" stroke-width="1.5"/><circle cx="6.5" cy="13" r="1.6" fill="#13a10e"/></svg>
<svg style="left:735px;top:152px" width="15" height="15"><path d="M3.5 0 V14 M10.5 0 V4 M0 3.5 H14 M0 9.5 H4" fill="none" stroke="#242424" stroke-width="1"/><rect x="3.5" y="3.5" width="7" height="6" fill="#cfe4fa" stroke="#0f6cbd" stroke-width="1.1"/><path d="M7 13 L13.5 6" stroke="#13a10e" stroke-width="1.5"/><circle cx="6.5" cy="13" r="1.6" fill="#13a10e"/></svg>
<svg style="left:756px;top:105.5px" width="6" height="4"><path d="M0.5 0.5 L3 2.5 L5.5 0.5" fill="none" stroke="#424242" stroke-width="1.1"/></svg>
<svg style="left:756px;top:131.5px" width="6" height="4"><path d="M0.5 0.5 L3 2.5 L5.5 0.5" fill="none" stroke="#424242" stroke-width="1.1"/></svg>
<svg style="left:756px;top:157.5px" width="6" height="4"><path d="M0.5 0.5 L3 2.5 L5.5 0.5" fill="none" stroke="#424242" stroke-width="1.1"/></svg>
<svg style="left:788px;top:100px" width="16" height="16"><path d="M1.5 11 V4.5 H4.5 M11 11 V14" fill="none" stroke="#242424" stroke-width="1"/><rect x="5.5" y="0.5" width="5" height="5" rx="1" fill="#cfe4fa" stroke="#0f6cbd" stroke-width="1.1"/><rect x="10.5" y="4.5" width="4" height="5" rx="1" fill="#cfe4fa" stroke="#0f6cbd" stroke-width="1.1"/><circle cx="4.5" cy="11" r="4.2" fill="#13a10e"/><path d="M4.5 8.6 V13.4 M2.1 11 H6.9" stroke="#fff" stroke-width="1.1"/></svg>
<svg style="left:788px;top:126px" width="17" height="17"><path d="M5 11 V14 H6 M11 5 H13.5" fill="none" stroke="#242424" stroke-width="1"/><rect x="5.5" y="0.5" width="5" height="5" rx="1" fill="#cfe4fa" stroke="#0f6cbd" stroke-width="1.1"/><rect x="1.5" y="5.5" width="4" height="5" rx="1" fill="#cfe4fa" stroke="#0f6cbd" stroke-width="1.1"/><circle cx="11.5" cy="11" r="4.2" fill="#e0393e"/><path d="M9.6 9.1 L13.4 12.9 M13.4 9.1 L9.6 12.9" stroke="#fff" stroke-width="1.1"/></svg>
<svg style="left:789px;top:152px" width="16" height="16"><path d="M5 10.5 V14 M10.5 5 H13" fill="none" stroke="#242424" stroke-width="1"/><rect x="5.5" y="0.5" width="5" height="5" rx="1" fill="#cfe4fa" stroke="#0f6cbd" stroke-width="1.1"/><rect x="1.5" y="5.5" width="4" height="5" rx="1" fill="#cfe4fa" stroke="#0f6cbd" stroke-width="1.1"/><rect x="5.5" y="5.5" width="5" height="5" fill="none" stroke="#0f6cbd" stroke-width="1.1"/><path d="M8 13 L14 6" stroke="#13a10e" stroke-width="1.5"/><circle cx="7.5" cy="13" r="1.6" fill="#13a10e"/></svg>
<div class="a " style="left:810px;transform-origin:left center;top:107px;transform:translateY(-50%);font-size:12.5px;color:#242424">삽입</div>
<svg style="left:843px;top:105.5px" width="6" height="4"><path d="M0.5 0.5 L3 2.5 L5.5 0.5" fill="none" stroke="#424242" stroke-width="1.1"/></svg>
<div class="a " style="left:810px;transform-origin:left center;top:133px;transform:translateY(-50%);font-size:12.5px;color:#242424">삭제</div>
<svg style="left:843px;top:131.5px" width="6" height="4"><path d="M0.5 0.5 L3 2.5 L5.5 0.5" fill="none" stroke="#424242" stroke-width="1.1"/></svg>
<div class="a " style="left:810px;transform-origin:left center;top:159px;transform:translateY(-50%);font-size:12.5px;color:#242424">서식</div>
<svg style="left:838px;top:157.5px" width="6" height="4"><path d="M0.5 0.5 L3 2.5 L5.5 0.5" fill="none" stroke="#424242" stroke-width="1.1"/></svg>
<svg style="left:882px;top:111px" width="13" height="15"><path d="M12 1.5 H1 L6.5 7.5 L1 13.5 H12" fill="none" stroke="#242424" stroke-width="1.1"/></svg>
<svg style="left:909px;top:117.5px" width="6" height="4"><path d="M0.5 0.5 L3 2.5 L5.5 0.5" fill="none" stroke="#424242" stroke-width="1.1"/></svg>
<svg style="left:932px;top:110px" width="17" height="17"><path d="M1 1.5 H5.5 V5" fill="none" stroke="#1b7fd6" stroke-width="1.1"/><circle cx="3.5" cy="12" r="2.5" fill="none" stroke="#242424" stroke-width="1.1"/><path d="M1 8 H6" stroke="#242424" stroke-width="1.1"/><path d="M9 2 H15 L11 16" fill="none" stroke="#242424" stroke-width="1.1"/><path d="M8.5 12 L11 15.5 L13.5 12" fill="none" stroke="#242424" stroke-width="1"/></svg>
<svg style="left:955px;top:117.5px" width="6" height="4"><path d="M0.5 0.5 L3 2.5 L5.5 0.5" fill="none" stroke="#424242" stroke-width="1.1"/></svg>
<svg style="left:883px;top:138px" width="14" height="14"><path d="M2 8 L8 2 L13 7 L7 13 H3 Z" fill="none" stroke="#242424" stroke-width="1.1"/><path d="M2 8 L6 12 H3 Z" fill="#a54cc7"/><path d="M1.5 13.5 H7" stroke="#a54cc7" stroke-width="1.2"/></svg>
<svg style="left:904px;top:143.5px" width="6" height="4"><path d="M0.5 0.5 L3 2.5 L5.5 0.5" fill="none" stroke="#424242" stroke-width="1.1"/></svg>
<svg style="left:933px;top:138px" width="14" height="14"><circle cx="5.5" cy="5.5" r="4.5" stroke="#424242" stroke-width="1.1" fill="none"/><path d="M9 9 L13.5 13.5" stroke="#424242" stroke-width="1.1" fill="none"/></svg>
<svg style="left:955px;top:143.5px" width="6" height="4"><path d="M0.5 0.5 L3 2.5 L5.5 0.5" fill="none" stroke="#424242" stroke-width="1.1"/></svg>
<svg style="left:990px;top:104px" width="21" height="21"><rect x="0.7" y="0.7" width="19.6" height="19.6" rx="4" fill="none" stroke="#e06b3f" stroke-width="1.2"/><rect x="4" y="4" width="5.5" height="5.5" rx="1" fill="none" stroke="#e06b3f" stroke-width="1.1"/><rect x="11.5" y="4" width="5.5" height="5.5" rx="1" fill="none" stroke="#e06b3f" stroke-width="1.1"/><rect x="4" y="11.5" width="5.5" height="5.5" rx="1" fill="none" stroke="#e06b3f" stroke-width="1.1"/><rect x="11.5" y="11.5" width="5.5" height="5.5" rx="1" fill="none" stroke="#e06b3f" stroke-width="1.1"/></svg>
<div class="a" style="left:960px;width:80px;top:135px;text-align:center;font-size:12.5px;color:#242424;line-height:15px">추가</div>
<div class="a" style="left:955px;width:80px;top:151px;text-align:center;font-size:12.5px;color:#242424;line-height:15px">기능</div>
<svg style="left:1011px;top:157.5px" width="6" height="4"><path d="M0.5 0.5 L3 2.5 L5.5 0.5" fill="none" stroke="#424242" stroke-width="1.1"/></svg>
<svg style="left:1047.5px;top:104.7px" width="23" height="21"><defs><linearGradient id="cg" x1="0" y1="0" x2="0" y2="1"><stop offset="0" stop-color="#1aa0f0"/><stop offset=".3" stop-color="#1a8ce0"/><stop offset=".6" stop-color="#5bb760"/><stop offset="1" stop-color="#f5c800"/></linearGradient><linearGradient id="cg2" x1="0.7" y1="0" x2="0.3" y2="1"><stop offset="0" stop-color="#a04ff0"/><stop offset=".45" stop-color="#ef4f8a"/><stop offset="1" stop-color="#ff9a4a"/></linearGradient></defs><path d="M4.5 0 H14.5 Q16.3 0 17 2 L18 5 H12.5 Q11.5 5 11 6.5 L8.3 14 Q7.8 15 6.5 15 H1.5 Q0 15 0.3 13 L2.5 4 Q3.3 0 4.5 0 Z" fill="url(#cg)"/><path d="M14 5 H20.5 Q22.5 5 22.3 7 L20 16.5 Q19 20 16 20 H8 Q6.5 20 6 18.5 L5 15 H9 Q10.3 15 10.7 13.5 L12.5 6.5 Q13 5 14 5 Z" fill="url(#cg2)"/></svg>
<div class="a" style="left:1019px;width:80px;top:135px;text-align:center;font-size:13px;color:#242424;line-height:15px">Copilot</div>
<svg style="left:1135px;top:172.5px" width="10" height="6"><path d="M0.5 0.5 L5 4.5 L9.5 0.5" fill="none" stroke="#424242" stroke-width="1.1"/></svg>
<div class="a" style="left:16px;top:195px;width:124px;height:24px;background:#fff;border:1px solid #d1d1d1;border-radius:4px"></div>
<div class="a " style="left:21px;transform-origin:left center;top:207px;transform:translateY(-50%);font-size:13px;color:#242424">A1</div>
<svg style="left:126px;top:204.5px" width="10" height="6"><path d="M0.5 0.5 L5 4.5 L9.5 0.5" fill="none" stroke="#333" stroke-width="1.1"/></svg>
<div class="a" style="left:148px;top:195px;width:87px;height:24px;background:#fff;border:1px solid #d1d1d1;border-radius:4px"></div>
<svg style="left:158px;top:201px" width="11" height="11"><path d="M0.5 0.5 L10.5 10.5 M10.5 0.5 L0.5 10.5" stroke="#9a9a9a" stroke-width="1.1"/></svg>
<svg style="left:183px;top:201px" width="14" height="11"><path d="M0.5 6 L5 10.5 L13.5 0.5" fill="none" stroke="#9a9a9a" stroke-width="1.1"/></svg>
<div class="a " style="left:208px;transform-origin:left center;top:207px;transform:translateY(-50%);font-size:14px;color:#424242;font-family:Liberation Serif,serif"><i>f</i><span style="font-size:10px">x</span></div>
<svg style="left:225.5px;top:206.75px" width="5.0" height="3.5"><path d="M0.5 0.5 L2.5 2.0 L4.5 0.5" fill="none" stroke="#888" stroke-width="1.1"/></svg>
<div class="a" style="left:243px;top:195px;width:913px;height:24px;background:#fff;border:1px solid #d1d1d1;border-radius:4px"></div>
<div class="a " style="left:252px;transform-origin:left center;top:207px;transform:translateY(-50%);font-size:13.5px;color:#242424">NO</div>
<svg style="left:1135px;top:204.5px" width="10" height="6"><path d="M0.5 0.5 L5 4.5 L9.5 0.5" fill="none" stroke="#333" stroke-width="1.1"/></svg>
<div class="a" style="left:8px;top:224px;width:1144px;height:970px;background:#fff"></div>
<div class="a" style="left:8px;top:224px;width:1144px;height:28px;background:#f5f5f5"></div>
<div class="a" style="left:8px;top:224px;width:42px;height:970px;background:#f5f5f5"></div>
<div class="a" style="left:50px;top:234px;width:52px;height:18px;background:#c8e6d4"></div>
<svg style="left:35px;top:237px" width="12" height="12"><path d="M12 0 V12 H0 Z" fill="#bdbdbd"/></svg>
<div class="a" style="left:50px;width:52px;top:236px;text-align:center;font-size:12.5px;line-height:16px;color:#0e5c2f">A</div>
<div class="a" style="left:102px;width:137px;top:236px;text-align:center;font-size:12.5px;line-height:16px;color:#424242">B</div>
<div class="a" style="left:239px;width:131px;top:236px;text-align:center;font-size:12.5px;line-height:16px;color:#424242">C</div>
<div class="a" style="left:370px;width:121px;top:236px;text-align:center;font-size:12.5px;line-height:16px;color:#424242">D</div>
<div class="a" style="left:491px;width:276px;top:236px;text-align:center;font-size:12.5px;line-height:16px;color:#424242">E</div>
<div class="a" style="left:767px;width:143px;top:236px;text-align:center;font-size:12.5px;line-height:16px;color:#424242">F</div>
<div class="a" style="left:910px;width:156px;top:236px;text-align:center;font-size:12.5px;line-height:16px;color:#424242">G</div>
<div class="a" style="left:1066px;width:72px;top:236px;text-align:center;font-size:12.5px;line-height:16px;color:#424242">H</div>
<div class="a" style="left:102px;top:234px;width:1px;height:18px;background:#dcdcdc"></div>
<div class="a" style="left:239px;top:234px;width:1px;height:18px;background:#dcdcdc"></div>
<div class="a" style="left:370px;top:234px;width:1px;height:18px;background:#dcdcdc"></div>
<div class="a" style="left:491px;top:234px;width:1px;height:18px;background:#dcdcdc"></div>
<div class="a" style="left:767px;top:234px;width:1px;height:18px;background:#dcdcdc"></div>
<div class="a" style="left:910px;top:234px;width:1px;height:18px;background:#dcdcdc"></div>
<div class="a" style="left:1066px;top:234px;width:1px;height:18px;background:#dcdcdc"></div>
<div class="a" style="left:1138px;top:234px;width:1px;height:18px;background:#dcdcdc"></div>
<div class="a" style="left:8px;top:251px;width:1144px;height:1px;background:#d4d4d4"></div>
<div class="a" style="left:8px;top:252px;width:42px;height:44px;background:#c8e6d4"></div>
<div class="a" style="left:50px;top:297px;width:1016px;height:418px;background:#d9e1f2"></div>
<div class="a" style="left:102px;top:715px;width:137px;height:479px;background:#fff2cc"></div>
<div class="a" style="left:50px;top:253px;width:52px;height:43px;background:#e4e4e4"></div>
<div class="a" style="left:102px;top:253px;width:808px;height:21px;background:#ffff00"></div>
<div class="a" style="left:910px;top:253px;width:156px;height:21px;background:#e4e4e4"></div>
<div class="a" style="left:102px;top:274px;width:964px;height:22px;background:#fff"></div>
<div class="a" style="left:8px;top:319px;width:42px;height:1px;background:#dadada"></div>
<div class="a" style="left:50px;top:319px;width:1102px;height:1px;background:#d4d4d4"></div>
<div class="a" style="left:8px;top:341px;width:42px;height:1px;background:#dadada"></div>
<div class="a" style="left:50px;top:341px;width:1102px;height:1px;background:#d4d4d4"></div>
<div class="a" style="left:8px;top:363px;width:42px;height:1px;background:#dadada"></div>
<div class="a" style="left:50px;top:363px;width:1102px;height:1px;background:#d4d4d4"></div>
<div class="a" style="left:8px;top:385px;width:42px;height:1px;background:#dadada"></div>
<div class="a" style="left:50px;top:385px;width:1102px;height:1px;background:#d4d4d4"></div>
<div class="a" style="left:8px;top:407px;width:42px;height:1px;background:#dadada"></div>
<div class="a" style="left:50px;top:407px;width:1102px;height:1px;background:#d4d4d4"></div>
<div class="a" style="left:8px;top:429px;width:42px;height:1px;background:#dadada"></div>
<div class="a" style="left:50px;top:429px;width:1102px;height:1px;background:#d4d4d4"></div>
<div class="a" style="left:8px;top:451px;width:42px;height:1px;background:#dadada"></div>
<div class="a" style="left:50px;top:451px;width:1102px;height:1px;background:#d4d4d4"></div>
<div class="a" style="left:8px;top:473px;width:42px;height:1px;background:#dadada"></div>
<div class="a" style="left:50px;top:473px;width:1102px;height:1px;background:#d4d4d4"></div>
<div class="a" style="left:8px;top:495px;width:42px;height:1px;background:#dadada"></div>
<div class="a" style="left:50px;top:495px;width:1102px;height:1px;background:#d4d4d4"></div>
<div class="a" style="left:8px;top:517px;width:42px;height:1px;background:#dadada"></div>
<div class="a" style="left:50px;top:517px;width:1102px;height:1px;background:#d4d4d4"></div>
<div class="a" style="left:8px;top:539px;width:42px;height:1px;background:#dadada"></div>
<div class="a" style="left:50px;top:539px;width:1102px;height:1px;background:#d4d4d4"></div>
<div class="a" style="left:8px;top:561px;width:42px;height:1px;background:#dadada"></div>
<div class="a" style="left:50px;top:561px;width:1102px;height:1px;background:#d4d4d4"></div>
<div class="a" style="left:8px;top:583px;width:42px;height:1px;background:#dadada"></div>
<div class="a" style="left:50px;top:583px;width:1102px;height:1px;background:#d4d4d4"></div>
<div class="a" style="left:8px;top:605px;width:42px;height:1px;background:#dadada"></div>
<div class="a" style="left:50px;top:605px;width:1102px;height:1px;background:#d4d4d4"></div>
<div class="a" style="left:8px;top:627px;width:42px;height:1px;background:#dadada"></div>
<div class="a" style="left:50px;top:627px;width:1102px;height:1px;background:#d4d4d4"></div>
<div class="a" style="left:8px;top:649px;width:42px;height:1px;background:#dadada"></div>
<div class="a" style="left:50px;top:649px;width:1102px;height:1px;background:#d4d4d4"></div>
<div class="a" style="left:8px;top:671px;width:42px;height:1px;background:#dadada"></div>
<div class="a" style="left:50px;top:671px;width:1102px;height:1px;background:#d4d4d4"></div>
<div class="a" style="left:8px;top:693px;width:42px;height:1px;background:#dadada"></div>
<div class="a" style="left:50px;top:693px;width:1102px;height:1px;background:#d4d4d4"></div>
<div class="a" style="left:8px;top:715px;width:42px;height:1px;background:#dadada"></div>
<div class="a" style="left:50px;top:715px;width:1102px;height:1px;background:#d4d4d4"></div>
<div class="a" style="left:8px;top:737px;width:42px;height:1px;background:#dadada"></div>
<div class="a" style="left:50px;top:737px;width:1102px;height:1px;background:#d4d4d4"></div>
<div class="a" style="left:8px;top:759px;width:42px;height:1px;background:#dadada"></div>
<div class="a" style="left:50px;top:759px;width:1102px;height:1px;background:#d4d4d4"></div>
<div class="a" style="left:8px;top:781px;width:42px;height:1px;background:#dadada"></div>
<div class="a" style="left:50px;top:781px;width:1102px;height:1px;background:#d4d4d4"></div>
<div class="a" style="left:8px;top:803px;width:42px;height:1px;background:#dadada"></div>
<div class="a" style="left:50px;top:803px;width:1102px;height:1px;background:#d4d4d4"></div>
<div class="a" style="left:8px;top:825px;width:42px;height:1px;background:#dadada"></div>
<div class="a" style="left:50px;top:825px;width:1102px;height:1px;background:#d4d4d4"></div>
<div class="a" style="left:8px;top:847px;width:42px;height:1px;background:#dadada"></div>
<div class="a" style="left:50px;top:847px;width:1102px;height:1px;background:#d4d4d4"></div>
<div class="a" style="left:8px;top:869px;width:42px;height:1px;background:#dadada"></div>
<div class="a" style="left:50px;top:869px;width:1102px;height:1px;background:#d4d4d4"></div>
<div class="a" style="left:8px;top:891px;width:42px;height:1px;background:#dadada"></div>
<div class="a" style="left:50px;top:891px;width:1102px;height:1px;background:#d4d4d4"></div>
<div class="a" style="left:8px;top:913px;width:42px;height:1px;background:#dadada"></div>
<div class="a" style="left:50px;top:913px;width:1102px;height:1px;background:#d4d4d4"></div>
<div class="a" style="left:8px;top:935px;width:42px;height:1px;background:#dadada"></div>
<div class="a" style="left:50px;top:935px;width:1102px;height:1px;background:#d4d4d4"></div>
<div class="a" style="left:8px;top:957px;width:42px;height:1px;background:#dadada"></div>
<div class="a" style="left:50px;top:957px;width:1102px;height:1px;background:#d4d4d4"></div>
<div class="a" style="left:8px;top:979px;width:42px;height:1px;background:#dadada"></div>
<div class="a" style="left:50px;top:979px;width:1102px;height:1px;background:#d4d4d4"></div>
<div class="a" style="left:8px;top:1001px;width:42px;height:1px;background:#dadada"></div>
<div class="a" style="left:50px;top:1001px;width:1102px;height:1px;background:#d4d4d4"></div>
<div class="a" style="left:8px;top:1023px;width:42px;height:1px;background:#dadada"></div>
<div class="a" style="left:50px;top:1023px;width:1102px;height:1px;background:#d4d4d4"></div>
<div class="a" style="left:8px;top:1045px;width:42px;height:1px;background:#dadada"></div>
<div class="a" style="left:50px;top:1045px;width:1102px;height:1px;background:#d4d4d4"></div>
<div class="a" style="left:8px;top:1067px;width:42px;height:1px;background:#dadada"></div>
<div class="a" style="left:50px;top:1067px;width:1102px;height:1px;background:#d4d4d4"></div>
<div class="a" style="left:8px;top:1089px;width:42px;height:1px;background:#dadada"></div>
<div class="a" style="left:50px;top:1089px;width:1102px;height:1px;background:#d4d4d4"></div>
<div class="a" style="left:8px;top:1111px;width:42px;height:1px;background:#dadada"></div>
<div class="a" style="left:50px;top:1111px;width:1102px;height:1px;background:#d4d4d4"></div>
<div class="a" style="left:8px;top:1133px;width:42px;height:1px;background:#dadada"></div>
<div class="a" style="left:50px;top:1133px;width:1102px;height:1px;background:#d4d4d4"></div>
<div class="a" style="left:8px;top:1155px;width:42px;height:1px;background:#dadada"></div>
<div class="a" style="left:50px;top:1155px;width:1102px;height:1px;background:#d4d4d4"></div>
<div class="a" style="left:8px;top:1177px;width:42px;height:1px;background:#dadada"></div>
<div class="a" style="left:50px;top:1177px;width:1102px;height:1px;background:#d4d4d4"></div>
<div class="a" style="left:8px;top:1199px;width:42px;height:1px;background:#dadada"></div>
<div class="a" style="left:50px;top:1199px;width:1102px;height:1px;background:#d4d4d4"></div>
<div class="a" style="left:8px;top:273px;width:42px;height:1px;background:#b5d6c2"></div>
<div class="a" style="left:1066px;top:274px;width:86px;height:1px;background:#d4d4d4"></div>
<div class="a" style="left:239px;top:252px;width:1px;height:942px;background:#d4d4d4"></div>
<div class="a" style="left:491px;top:252px;width:1px;height:942px;background:#d4d4d4"></div>
<div class="a" style="left:767px;top:252px;width:1px;height:942px;background:#d4d4d4"></div>
<div class="a" style="left:910px;top:252px;width:1px;height:942px;background:#d4d4d4"></div>
<div class="a" style="left:1066px;top:252px;width:1px;height:942px;background:#d4d4d4"></div>
<div class="a" style="left:1138px;top:252px;width:1px;height:942px;background:#d4d4d4"></div>
<div class="a" style="left:50px;top:252px;width:1px;height:942px;background:#c2c2c2"></div>
<div class="a" style="left:102px;top:252px;width:1px;height:45px;background:#1a1a1a"></div>
<div class="a" style="left:239px;top:252px;width:1px;height:45px;background:#1a1a1a"></div>
<div class="a" style="left:370px;top:252px;width:1px;height:45px;background:#1a1a1a"></div>
<div class="a" style="left:491px;top:252px;width:1px;height:45px;background:#1a1a1a"></div>
<div class="a" style="left:767px;top:252px;width:1px;height:45px;background:#1a1a1a"></div>
<div class="a" style="left:910px;top:252px;width:1px;height:45px;background:#1a1a1a"></div>
<div class="a" style="left:1066px;top:252px;width:1px;height:45px;background:#1a1a1a"></div>
<div class="a" style="left:102px;top:274px;width:964px;height:1px;background:#1a1a1a"></div>
<div class="a" style="left:101px;top:252px;width:1px;height:942px;background:#1a1a1a"></div>
<div class="a" style="left:8px;top:296px;width:1144px;height:2px;background:#808080"></div>
<div class="a" style="left:102px;top:298px;width:964px;height:1px;background:#1a1a1a"></div>
<div class="a" style="left:370px;top:224px;width:2px;height:970px;background:#808080"></div>
<div class="a" style="left:49px;top:251px;width:54px;height:49px;border:2px solid #107c41"></div>
<div class="a" style="left:98px;top:296px;width:6px;height:5px;background:#107c41;border:1px solid #fff"></div>
<svg style="left:231px;top:252px" width="8" height="8"><path d="M0 0 H8 V8 Z" fill="#ff0000"/></svg>
<div class="a" style="left:8px;width:38px;top:256px;text-align:right;font-size:13px;line-height:16px;color:#0e5c2f">1</div>
<div class="a" style="left:8px;width:38px;top:278px;text-align:right;font-size:13px;line-height:16px;color:#0e5c2f">2</div>
<div class="a" style="left:8px;width:38px;top:301px;text-align:right;font-size:13px;line-height:16px;color:#424242">3</div>
<div class="a" style="left:8px;width:38px;top:323px;text-align:right;font-size:13px;line-height:16px;color:#424242">4</div>
<div class="a" style="left:8px;width:38px;top:345px;text-align:right;font-size:13px;line-height:16px;color:#424242">5</div>
<div class="a" style="left:8px;width:38px;top:367px;text-align:right;font-size:13px;line-height:16px;color:#424242">6</div>
<div class="a" style="left:8px;width:38px;top:389px;text-align:right;font-size:13px;line-height:16px;color:#424242">7</div>
<div class="a" style="left:8px;width:38px;top:411px;text-align:right;font-size:13px;line-height:16px;color:#424242">8</div>
<div class="a" style="left:8px;width:38px;top:433px;text-align:right;font-size:13px;line-height:16px;color:#424242">9</div>
<div class="a" style="left:8px;width:38px;top:455px;text-align:right;font-size:13px;line-height:16px;color:#424242">10</div>
<div class="a" style="left:8px;width:38px;top:477px;text-align:right;font-size:13px;line-height:16px;color:#424242">11</div>
<div class="a" style="left:8px;width:38px;top:499px;text-align:right;font-size:13px;line-height:16px;color:#424242">12</div>
<div class="a" style="left:8px;width:38px;top:521px;text-align:right;font-size:13px;line-height:16px;color:#424242">13</div>
<div class="a" style="left:8px;width:38px;top:543px;text-align:right;font-size:13px;line-height:16px;color:#424242">14</div>
<div class="a" style="left:8px;width:38px;top:565px;text-align:right;font-size:13px;line-height:16px;color:#424242">15</div>
<div class="a" style="left:8px;width:38px;top:587px;text-align:right;font-size:13px;line-height:16px;color:#424242">16</div>
<div class="a" style="left:8px;width:38px;top:609px;text-align:right;font-size:13px;line-height:16px;color:#424242">17</div>
<div class="a" style="left:8px;width:38px;top:631px;text-align:right;font-size:13px;line-height:16px;color:#424242">18</div>
<div class="a" style="left:8px;width:38px;top:653px;text-align:right;font-size:13px;line-height:16px;color:#424242">19</div>
<div class="a" style="left:8px;width:38px;top:675px;text-align:right;font-size:13px;line-height:16px;color:#424242">20</div>
<div class="a" style="left:8px;width:38px;top:697px;text-align:right;font-size:13px;line-height:16px;color:#424242">21</div>
<div class="a" style="left:8px;width:38px;top:719px;text-align:right;font-size:13px;line-height:16px;color:#424242">22</div>
<div class="a" style="left:8px;width:38px;top:741px;text-align:right;font-size:13px;line-height:16px;color:#424242">23</div>
<div class="a" style="left:8px;width:38px;top:763px;text-align:right;font-size:13px;line-height:16px;color:#424242">24</div>
<div class="a" style="left:8px;width:38px;top:785px;text-align:right;font-size:13px;line-height:16px;color:#424242">25</div>
<div class="a" style="left:8px;width:38px;top:807px;text-align:right;font-size:13px;line-height:16px;color:#424242">26</div>
<div class="a" style="left:8px;width:38px;top:829px;text-align:right;font-size:13px;line-height:16px;color:#424242">27</div>
<div class="a" style="left:8px;width:38px;top:851px;text-align:right;font-size:13px;line-height:16px;color:#424242">28</div>
<div class="a" style="left:8px;width:38px;top:873px;text-align:right;font-size:13px;line-height:16px;color:#424242">29</div>
<div class="a" style="left:8px;width:38px;top:895px;text-align:right;font-size:13px;line-height:16px;color:#424242">30</div>
<div class="a" style="left:8px;width:38px;top:917px;text-align:right;font-size:13px;line-height:16px;color:#424242">31</div>
<div class="a" style="left:8px;width:38px;top:939px;text-align:right;font-size:13px;line-height:16px;color:#424242">32</div>
<div class="a" style="left:8px;width:38px;top:961px;text-align:right;font-size:13px;line-height:16px;color:#424242">33</div>
<div class="a" style="left:8px;width:38px;top:983px;text-align:right;font-size:13px;line-height:16px;color:#424242">34</div>
<div class="a" style="left:8px;width:38px;top:1005px;text-align:right;font-size:13px;line-height:16px;color:#424242">35</div>
<div class="a" style="left:8px;width:38px;top:1027px;text-align:right;font-size:13px;line-height:16px;color:#424242">36</div>
<div class="a" style="left:8px;width:38px;top:1049px;text-align:right;font-size:13px;line-height:16px;color:#424242">37</div>
<div class="a" style="left:8px;width:38px;top:1071px;text-align:right;font-size:13px;line-height:16px;color:#424242">38</div>
<div class="a" style="left:8px;width:38px;top:1093px;text-align:right;font-size:13px;line-height:16px;color:#424242">39</div>
<div class="a" style="left:8px;width:38px;top:1115px;text-align:right;font-size:13px;line-height:16px;color:#424242">40</div>
<div class="a" style="left:8px;width:38px;top:1137px;text-align:right;font-size:13px;line-height:16px;color:#424242">41</div>
<div class="a" style="left:8px;width:38px;top:1159px;text-align:right;font-size:13px;line-height:16px;color:#424242">42</div>
<div class="a" style="left:8px;width:38px;top:1181px;text-align:right;font-size:13px;line-height:16px;color:#424242">43</div>
<div class="a" style="left:50px;width:52px;top:266px;text-align:center;font-size:15px;font-weight:bold;line-height:20px;color:#000">NO</div>
<div class="a" style="left:102px;width:137px;top:255px;text-align:center;font-size:14.5px;color:#000;font-weight:bold;line-height:18px"><span style="color:#f00">*</span> 회사명</div>
<div class="a" style="left:239px;width:131px;top:255px;text-align:center;font-size:14.5px;color:#000;font-weight:bold;line-height:18px"><span style="color:#f00">*</span> 담당자명</div>
<div class="a" style="left:370px;width:121px;top:255px;text-align:center;font-size:14.5px;color:#000;font-weight:bold;line-height:18px"><span style="color:#f00">*</span> 담당자직책명</div>
<div class="a" style="left:491px;width:276px;top:255px;text-align:center;font-size:14.5px;color:#000;font-weight:bold;line-height:18px"><span style="color:#f00">*</span> 담당자이메일주소</div>
<div class="a" style="left:767px;width:143px;top:255px;text-align:center;font-size:14.5px;color:#000;font-weight:bold;line-height:18px"><span style="color:#f00">*</span> 담당자전화번호</div>
<div class="a" style="left:910px;width:156px;top:255px;text-align:center;font-size:14.5px;color:#000;font-weight:bold;line-height:18px">담당자법인전화번호</div>
<div class="a" style="left:102px;width:137px;top:277px;text-align:center;font-size:12px;color:#000;line-height:18px;letter-spacing:1.5px;padding-top:1.5px;text-indent:3px">목록선택</div>
<div class="a" style="left:239px;width:131px;top:277px;text-align:center;font-size:12px;color:#000;line-height:18px;letter-spacing:1.5px;padding-top:1.5px;text-indent:3px">텍스트</div>
<div class="a" style="left:370px;width:121px;top:277px;text-align:center;font-size:12px;color:#000;line-height:18px;letter-spacing:1.5px;padding-top:1.5px;text-indent:3px">텍스트</div>
<div class="a" style="left:491px;width:276px;top:277px;text-align:center;font-size:12px;color:#000;line-height:18px;letter-spacing:1.5px;padding-top:1.5px;text-indent:3px">텍스트</div>
<div class="a" style="left:767px;width:143px;top:277px;text-align:center;font-size:12px;color:#000;line-height:18px;letter-spacing:1.5px;padding-top:1.5px;text-indent:3px">텍스트</div>
<div class="a" style="left:910px;width:156px;top:277px;text-align:center;font-size:12px;color:#000;line-height:18px;letter-spacing:1.5px;padding-top:1.5px;text-indent:3px">텍스트</div>
<div class="a" style="left:50px;width:52px;top:300px;text-align:center;font-size:14.5px;color:#000;line-height:18px">Ex 1.</div>
<div class="a" style="left:105px;width:134px;top:300px;text-align:left;font-size:14.5px;color:#000;line-height:18px">똑똑테크놀로지</div>
<div class="a" style="left:242px;width:128px;top:300px;text-align:left;font-size:14.5px;color:#000;line-height:18px">신기술</div>
<div class="a" style="left:373px;width:118px;top:300px;text-align:left;font-size:14.5px;color:#000;line-height:18px">대표</div>
<div class="a" style="left:494px;width:273px;top:300px;text-align:left;font-size:15px;color:#000;line-height:18px">newtech@ddocktech.com</div>
<div class="a" style="left:50px;width:52px;top:322px;text-align:center;font-size:14.5px;color:#000;line-height:18px">Ex 2.</div>
<div class="a" style="left:105px;width:134px;top:322px;text-align:left;font-size:14.5px;color:#000;line-height:18px">팀블루</div>
<div class="a" style="left:242px;width:128px;top:322px;text-align:left;font-size:15px;color:#000;line-height:18px">Jack Park</div>
<div class="a" style="left:373px;width:118px;top:322px;text-align:left;font-size:15px;color:#000;line-height:18px">CEO</div>
<div class="a" style="left:494px;width:273px;top:322px;text-align:left;font-size:15px;color:#000;line-height:18px">jack@teamblue.com</div>
<div class="a" style="left:770px;width:140px;top:322px;text-align:left;font-size:15px;color:#000;line-height:18px">+1 (415) 555-1001</div>
<div class="a" style="left:913px;width:153px;top:322px;text-align:left;font-size:15px;color:#000;line-height:18px">+1 (415) 555-1234</div>
<div class="a" style="left:50px;width:52px;top:344px;text-align:center;font-size:14.5px;color:#000;line-height:18px">Ex 3.</div>
<div class="a" style="left:105px;width:134px;top:344px;text-align:left;font-size:14.5px;color:#000;line-height:18px">팀블루</div>
<div class="a" style="left:242px;width:128px;top:344px;text-align:left;font-size:15px;color:#000;line-height:18px">Susan Kim</div>
<div class="a" style="left:373px;width:118px;top:344px;text-align:left;font-size:15px;color:#000;line-height:18px">CTO</div>
<div class="a" style="left:494px;width:273px;top:344px;text-align:left;font-size:15px;color:#000;line-height:18px">ss.kim@teamblue.com</div>
<div class="a" style="left:770px;width:140px;top:344px;text-align:left;font-size:15px;color:#000;line-height:18px">+1 (415) 555-1002</div>
<div class="a" style="left:913px;width:153px;top:344px;text-align:left;font-size:15px;color:#000;line-height:18px">+1 (415) 555-1234</div>
<div class="a" style="left:50px;width:52px;top:366px;text-align:center;font-size:14.5px;color:#000;line-height:18px">Ex 4.</div>
<div class="a" style="left:105px;width:134px;top:366px;text-align:left;font-size:14.5px;color:#000;line-height:18px">팀블루</div>
<div class="a" style="left:242px;width:128px;top:366px;text-align:left;font-size:15px;color:#000;line-height:18px">Michael Johnson</div>
<div class="a" style="left:373px;width:118px;top:366px;text-align:left;font-size:15px;color:#000;line-height:18px">CFO</div>
<div class="a" style="left:494px;width:273px;top:366px;text-align:left;font-size:15px;color:#000;line-height:18px">johnsoon@teamblue.com</div>
<div class="a" style="left:770px;width:140px;top:366px;text-align:left;font-size:15px;color:#000;line-height:18px">+1 (415) 555-1003</div>
<div class="a" style="left:913px;width:153px;top:366px;text-align:left;font-size:15px;color:#000;line-height:18px">+1 (415) 555-1234</div>
<div class="a" style="left:50px;width:52px;top:388px;text-align:center;font-size:14.5px;color:#000;line-height:18px">Ex 5.</div>
<div class="a" style="left:105px;width:134px;top:388px;text-align:left;font-size:14.5px;color:#000;line-height:18px">(주)퍼플링크</div>
<div class="a" style="left:242px;width:128px;top:388px;text-align:left;font-size:14.5px;color:#000;line-height:18px">박주원</div>
<div class="a" style="left:373px;width:118px;top:388px;text-align:left;font-size:14.5px;color:#000;line-height:18px">대표이사</div>
<div class="a" style="left:494px;width:273px;top:388px;text-align:left;font-size:15px;color:#000;line-height:18px">jw@pplinkkorea.kr</div>
<div class="a" style="left:770px;width:140px;top:388px;text-align:left;font-size:15px;color:#000;line-height:18px">010-3585-3949</div>
<div class="a" style="left:50px;width:52px;top:410px;text-align:center;font-size:14.5px;color:#000;line-height:18px">Ex 6.</div>
<div class="a" style="left:105px;width:134px;top:410px;text-align:left;font-size:14.5px;color:#000;line-height:18px">그린랩</div>
<div class="a" style="left:242px;width:128px;top:410px;text-align:left;font-size:14.5px;color:#000;line-height:18px">박재현</div>
<div class="a" style="left:373px;width:118px;top:410px;text-align:left;font-size:14.5px;color:#000;line-height:18px">대표이사</div>
<div class="a" style="left:494px;width:273px;top:410px;text-align:left;font-size:15px;color:#000;line-height:18px">jaehyun.park@greenlab.co.kr</div>
<div class="a" style="left:770px;width:140px;top:410px;text-align:left;font-size:15px;color:#000;line-height:18px">010-3455-2345</div>
<div class="a" style="left:913px;width:153px;top:410px;text-align:left;font-size:15px;color:#000;line-height:18px">02-124-5637</div>
<div class="a" style="left:50px;width:52px;top:432px;text-align:center;font-size:14.5px;color:#000;line-height:18px">Ex 7.</div>
<div class="a" style="left:105px;width:134px;top:432px;text-align:left;font-size:14.5px;color:#000;line-height:18px">화이트사이언스</div>
<div class="a" style="left:242px;width:128px;top:432px;text-align:left;font-size:14.5px;color:#000;line-height:18px">김범진</div>
<div class="a" style="left:373px;width:118px;top:432px;text-align:left;font-size:15px;color:#000;line-height:18px">CEO</div>
<div class="a" style="left:494px;width:273px;top:432px;text-align:left;font-size:15px;color:#000;line-height:18px">bjkim@whscience.com</div>
<div class="a" style="left:770px;width:140px;top:432px;text-align:left;font-size:15px;color:#000;line-height:18px">010-4932-3302</div>
<div class="a" style="left:50px;width:52px;top:454px;text-align:center;font-size:14.5px;color:#000;line-height:18px">Ex 8.</div>
<div class="a" style="left:105px;width:134px;top:454px;text-align:left;font-size:14.5px;color:#000;line-height:18px">화이트사이언스</div>
<div class="a" style="left:242px;width:128px;top:454px;text-align:left;font-size:15px;color:#000;line-height:18px">Jason O Michael</div>
<div class="a" style="left:373px;width:118px;top:454px;text-align:left;font-size:15px;color:#000;line-height:18px">CTO</div>
<div class="a" style="left:494px;width:273px;top:454px;text-align:left;font-size:15px;color:#000;line-height:18px">jhoo@whscience.com</div>
<div class="a" style="left:50px;width:52px;top:476px;text-align:center;font-size:14.5px;color:#000;line-height:18px">Ex 9.</div>
<div class="a" style="left:105px;width:134px;top:476px;text-align:left;font-size:14.5px;color:#000;line-height:18px">화이트사이언스</div>
<div class="a" style="left:242px;width:128px;top:476px;text-align:left;font-size:15px;color:#000;line-height:18px">Robert Jesh jr</div>
<div class="a" style="left:373px;width:118px;top:476px;text-align:left;font-size:15px;color:#000;line-height:18px">CFO</div>
<div class="a" style="left:494px;width:273px;top:476px;text-align:left;font-size:15px;color:#000;line-height:18px">songjm@whscience.com</div>
<div class="a" style="left:50px;width:52px;top:498px;text-align:center;font-size:14.5px;color:#000;line-height:18px">Ex 10.</div>
<div class="a" style="left:105px;width:134px;top:498px;text-align:left;font-size:14.5px;color:#000;line-height:18px">레드컴퍼니</div>
<div class="a" style="left:242px;width:128px;top:498px;text-align:left;font-size:14.5px;color:#000;line-height:18px">박찬조</div>
<div class="a" style="left:373px;width:118px;top:498px;text-align:left;font-size:14.5px;color:#000;line-height:18px">대표이사</div>
<div class="a" style="left:494px;width:273px;top:498px;text-align:left;font-size:15px;color:#000;line-height:18px">cjo@redcompany.com</div>
<div class="a" style="left:770px;width:140px;top:498px;text-align:left;font-size:15px;color:#000;line-height:18px">010-2345-1919</div>
<div class="a" style="left:50px;width:52px;top:520px;text-align:center;font-size:14.5px;color:#000;line-height:18px">Ex 11.</div>
<div class="a" style="left:105px;width:134px;top:520px;text-align:left;font-size:14.5px;color:#000;line-height:18px">네이비테라퓨틱스</div>
<div class="a" style="left:242px;width:128px;top:520px;text-align:left;font-size:14.5px;color:#000;line-height:18px">김훈민</div>
<div class="a" style="left:373px;width:118px;top:520px;text-align:left;font-size:14.5px;color:#000;line-height:18px">대표</div>
<div class="a" style="left:494px;width:273px;top:520px;text-align:left;font-size:15px;color:#000;line-height:18px">hunmin@navythera.com</div>
<div class="a" style="left:770px;width:140px;top:520px;text-align:left;font-size:15px;color:#000;line-height:18px">010-9999-9999</div>
<div class="a" style="left:913px;width:153px;top:520px;text-align:left;font-size:15px;color:#000;line-height:18px">02-9999-8888</div>
<div class="a" style="left:50px;width:52px;top:542px;text-align:center;font-size:14.5px;color:#000;line-height:18px">Ex 12.</div>
<div class="a" style="left:105px;width:134px;top:542px;text-align:left;font-size:14.5px;color:#000;line-height:18px">핑크테크놀로지</div>
<div class="a" style="left:242px;width:128px;top:542px;text-align:left;font-size:14.5px;color:#000;line-height:18px">박지현</div>
<div class="a" style="left:373px;width:118px;top:542px;text-align:left;font-size:14.5px;color:#000;line-height:18px">대표이사</div>
<div class="a" style="left:494px;width:273px;top:542px;text-align:left;font-size:15px;color:#000;line-height:18px">jh@pinktechnology.com</div>
<div class="a" style="left:770px;width:140px;top:542px;text-align:left;font-size:15px;color:#000;line-height:18px">010-1234-5678</div>
<div class="a" style="left:913px;width:153px;top:542px;text-align:left;font-size:15px;color:#000;line-height:18px">02-4133-33333</div>
<div class="a" style="left:50px;width:52px;top:564px;text-align:center;font-size:14.5px;color:#000;line-height:18px">Ex 13.</div>
<div class="a" style="left:105px;width:134px;top:564px;text-align:left;font-size:14.5px;color:#000;line-height:18px">핑크테크놀로지</div>
<div class="a" style="left:242px;width:128px;top:564px;text-align:left;font-size:14.5px;color:#000;line-height:18px">박지현</div>
<div class="a" style="left:373px;width:118px;top:564px;text-align:left;font-size:15px;color:#000;line-height:18px">CEO</div>
<div class="a" style="left:494px;width:273px;top:564px;text-align:left;font-size:15px;color:#000;line-height:18px">parkjihyun@pinktechnology.com</div>
<div class="a" style="left:770px;width:140px;top:564px;text-align:left;font-size:15px;color:#000;line-height:18px">010-2345-6789</div>
<div class="a" style="left:913px;width:153px;top:564px;text-align:left;font-size:15px;color:#000;line-height:18px">02-551-1266</div>
<div class="a" style="left:50px;width:52px;top:586px;text-align:center;font-size:14.5px;color:#000;line-height:18px">Ex 14.</div>
<div class="a" style="left:105px;width:134px;top:586px;text-align:left;font-size:14.5px;color:#000;line-height:18px">핑크테크놀로지</div>
<div class="a" style="left:242px;width:128px;top:586px;text-align:left;font-size:14.5px;color:#000;line-height:18px">이민재</div>
<div class="a" style="left:373px;width:118px;top:586px;text-align:left;font-size:15px;color:#000;line-height:18px">CFO</div>
<div class="a" style="left:494px;width:273px;top:586px;text-align:left;font-size:15px;color:#000;line-height:18px">leeminjae@pinktechnology.com</div>
<div class="a" style="left:770px;width:140px;top:586px;text-align:left;font-size:15px;color:#000;line-height:18px">010-1266-8876</div>
<div class="a" style="left:913px;width:153px;top:586px;text-align:left;font-size:15px;color:#000;line-height:18px">02-551-1266</div>
<div class="a" style="left:50px;width:52px;top:608px;text-align:center;font-size:14.5px;color:#000;line-height:18px">Ex 15.</div>
<div class="a" style="left:105px;width:134px;top:608px;text-align:left;font-size:14.5px;color:#000;line-height:18px">핑크테크놀로지</div>
<div class="a" style="left:242px;width:128px;top:608px;text-align:left;font-size:14.5px;color:#000;line-height:18px">김영수</div>
<div class="a" style="left:373px;width:118px;top:608px;text-align:left;font-size:15px;color:#000;line-height:18px">CTO</div>
<div class="a" style="left:494px;width:273px;top:608px;text-align:left;font-size:15px;color:#000;line-height:18px">kimyoungsoo@pinktechnology.com</div>
<div class="a" style="left:770px;width:140px;top:608px;text-align:left;font-size:15px;color:#000;line-height:18px">010-3156-7812</div>
<div class="a" style="left:913px;width:153px;top:608px;text-align:left;font-size:15px;color:#000;line-height:18px">02-551-1266</div>
<div class="a" style="left:50px;width:52px;top:630px;text-align:center;font-size:14.5px;color:#000;line-height:18px">Ex 16.</div>
<div class="a" style="left:105px;width:134px;top:630px;text-align:left;font-size:14.5px;color:#000;line-height:18px">애플스메타(주)</div>
<div class="a" style="left:242px;width:128px;top:630px;text-align:left;font-size:14.5px;color:#000;line-height:18px">이철우</div>
<div class="a" style="left:373px;width:118px;top:630px;text-align:left;font-size:15px;color:#000;line-height:18px">CEO</div>
<div class="a" style="left:494px;width:273px;top:630px;text-align:left;font-size:15px;color:#000;line-height:18px">lee@apples.com</div>
<div class="a" style="left:50px;width:52px;top:652px;text-align:center;font-size:14.5px;color:#000;line-height:18px">Ex 17.</div>
<div class="a" style="left:105px;width:134px;top:652px;text-align:left;font-size:14.5px;color:#000;line-height:18px">(주)메이틱스</div>
<div class="a" style="left:242px;width:128px;top:652px;text-align:left;font-size:14.5px;color:#000;line-height:18px">김기우</div>
<div class="a" style="left:373px;width:118px;top:652px;text-align:left;font-size:14.5px;color:#000;line-height:18px">총괄담당</div>
<div class="a" style="left:494px;width:273px;top:652px;text-align:left;font-size:15px;color:#000;line-height:18px">KKS@gmail.com</div>
<div class="a" style="left:770px;width:140px;top:652px;text-align:left;font-size:15px;color:#000;line-height:18px">010-8112-9000</div>
<div class="a" style="left:50px;width:52px;top:674px;text-align:center;font-size:14.5px;color:#000;line-height:18px">Ex 18.</div>
<div class="a" style="left:105px;width:134px;top:674px;text-align:left;font-size:14.5px;color:#000;line-height:18px">켈리클(주)</div>
<div class="a" style="left:242px;width:128px;top:674px;text-align:left;font-size:14.5px;color:#000;line-height:18px">양보준</div>
<div class="a" style="left:373px;width:118px;top:674px;text-align:left;font-size:14.5px;color:#000;line-height:18px">차장</div>
<div class="a" style="left:494px;width:273px;top:674px;text-align:left;font-size:15px;color:#000;line-height:18px">Bojo@kelly.com</div>
<div class="a" style="left:770px;width:140px;top:674px;text-align:left;font-size:15px;color:#000;line-height:18px">010-2424-2424</div>
<div class="a" style="left:50px;width:52px;top:696px;text-align:center;font-size:14.5px;color:#000;line-height:18px">Ex 19.</div>
<div class="a" style="left:105px;width:134px;top:696px;text-align:left;font-size:14.5px;color:#000;line-height:18px">NN헬스케어</div>
<div class="a" style="left:242px;width:128px;top:696px;text-align:left;font-size:14.5px;color:#000;line-height:18px">김판교</div>
<div class="a" style="left:373px;width:118px;top:696px;text-align:left;font-size:14.5px;color:#000;line-height:18px">대표이사</div>
<div class="a" style="left:494px;width:273px;top:696px;text-align:left;font-size:15px;color:#000;line-height:18px">pgkim@nnhealth.care</div>
<div class="a" style="left:770px;width:140px;top:696px;text-align:left;font-size:15px;color:#000;line-height:18px">010-9999-9999</div>
<div class="a" style="left:50px;width:52px;top:718px;text-align:center;font-size:14.5px;color:#000;line-height:18px">1</div>
<div class="a" style="left:50px;width:52px;top:740px;text-align:center;font-size:14.5px;color:#000;line-height:18px">2</div>
<div class="a" style="left:50px;width:52px;top:762px;text-align:center;font-size:14.5px;color:#000;line-height:18px">3</div>
<div class="a" style="left:50px;width:52px;top:784px;text-align:center;font-size:14.5px;color:#000;line-height:18px">4</div>
<div class="a" style="left:50px;width:52px;top:806px;text-align:center;font-size:14.5px;color:#000;line-height:18px">5</div>
<div class="a" style="left:50px;width:52px;top:828px;text-align:center;font-size:14.5px;color:#000;line-height:18px">6</div>
<div class="a" style="left:50px;width:52px;top:850px;text-align:center;font-size:14.5px;color:#000;line-height:18px">7</div>
<div class="a" style="left:50px;width:52px;top:872px;text-align:center;font-size:14.5px;color:#000;line-height:18px">8</div>
<div class="a" style="left:50px;width:52px;top:894px;text-align:center;font-size:14.5px;color:#000;line-height:18px">9</div>
<div class="a" style="left:50px;width:52px;top:916px;text-align:center;font-size:14.5px;color:#000;line-height:18px">10</div>
<div class="a" style="left:50px;width:52px;top:938px;text-align:center;font-size:14.5px;color:#000;line-height:18px">11</div>
<div class="a" style="left:50px;width:52px;top:960px;text-align:center;font-size:14.5px;color:#000;line-height:18px">12</div>
<div class="a" style="left:50px;width:52px;top:982px;text-align:center;font-size:14.5px;color:#000;line-height:18px">13</div>
<div class="a" style="left:50px;width:52px;top:1004px;text-align:center;font-size:14.5px;color:#000;line-height:18px">14</div>
<div class="a" style="left:50px;width:52px;top:1026px;text-align:center;font-size:14.5px;color:#000;line-height:18px">15</div>
<div class="a" style="left:50px;width:52px;top:1048px;text-align:center;font-size:14.5px;color:#000;line-height:18px">16</div>
<div class="a" style="left:50px;width:52px;top:1070px;text-align:center;font-size:14.5px;color:#000;line-height:18px">17</div>
<div class="a" style="left:50px;width:52px;top:1092px;text-align:center;font-size:14.5px;color:#000;line-height:18px">18</div>
<div class="a" style="left:50px;width:52px;top:1114px;text-align:center;font-size:14.5px;color:#000;line-height:18px">19</div>
<div class="a" style="left:50px;width:52px;top:1136px;text-align:center;font-size:14.5px;color:#000;line-height:18px">20</div>
<div class="a" style="left:50px;width:52px;top:1158px;text-align:center;font-size:14.5px;color:#000;line-height:18px">21</div>
<div class="a" style="left:50px;width:52px;top:1180px;text-align:center;font-size:14.5px;color:#000;line-height:18px">22</div>
<div class="a" style="left:8px;top:1194px;width:1144px;height:12px;background:#e6e6e6"></div>
<div class="a" style="left:26px;top:1197px;width:428px;height:6px;background:#8a8a8a;border-radius:3px"></div>
<svg style="left:12px;top:1196px" width="6" height="8"><path d="M6 0 V8 L0 4 Z" fill="#8a8a8a"/></svg>
<svg style="left:1141px;top:1196px" width="6" height="8"><path d="M0 0 V8 L6 4 Z" fill="#8a8a8a"/></svg>
<div class="a" style="left:1152px;top:224px;width:12px;height:982px;background:#e6e6e6"></div>
<div class="a" style="left:1155px;top:242px;width:6px;height:44px;background:#8a8a8a;border-radius:3px"></div>
<svg style="left:1154px;top:228px" width="8" height="6"><path d="M0 6 H8 L4 0 Z" fill="#8a8a8a"/></svg>
<svg style="left:1154px;top:1184px" width="8" height="6"><path d="M0 0 H8 L4 6 Z" fill="#8a8a8a"/></svg>
<div class="a" style="left:8px;top:1206px;width:1156px;height:30px;background:#f5f5f5"></div>
<svg style="left:20px;top:1215px" width="7" height="12"><path d="M6 1 L1 6 L6 11" fill="none" stroke="#424242" stroke-width="1.1"/></svg>
<svg style="left:53px;top:1215px" width="7" height="12"><path d="M1 1 L6 6 L1 11" fill="none" stroke="#a0a0a0" stroke-width="1.1"/></svg>
<svg style="left:82px;top:1215px" width="13" height="11"><path d="M0 1.5 H13 M0 5.5 H13 M0 9.5 H13" stroke="#424242" stroke-width="1"/></svg>
<div class="a" style="left:90px;top:1208px;width:34px;height:26px;background:#fde4da;border-radius:3px"></div>
<div class="a" style="left:90px;width:34px;top:1221px;transform:translateY(-50%);font-size:13.5px;color:#424242;overflow:hidden;text-align:right;padding-right:3px">타</div>
<div class="a" style="left:130px;top:1208px;width:130px;height:26px;background:#fde4da;border-radius:3px"></div>
<div class="a" style="left:130px;width:130px;top:1221px;transform:translateY(-50%);font-size:13.5px;color:#424242;text-align:center">투자조건-투자의무</div>
<div class="a" style="left:266px;top:1208px;width:96px;height:26px;background:#fff1d5;border-radius:3px"></div>
<div class="a" style="left:266px;width:96px;top:1221px;transform:translateY(-50%);font-size:13.5px;color:#424242;text-align:center">기타투자정보</div>
<div class="a" style="left:368px;top:1208px;width:82px;height:26px;background:#fff1d5;border-radius:3px"></div>
<div class="a" style="left:368px;width:82px;top:1221px;transform:translateY(-50%);font-size:13.5px;color:#424242;text-align:center">담당심사역</div>
<div class="a" style="left:456px;top:1208px;width:100px;height:26px;background:#fff1d5;border-radius:3px"></div>
<div class="a" style="left:456px;width:100px;top:1221px;transform:translateY(-50%);font-size:13.5px;color:#424242;text-align:center">투자심사 정보</div>
<div class="a" style="left:563px;top:1208px;width:97px;height:26px;background:#fff1d5;border-radius:3px"></div>
<div class="a" style="left:563px;width:97px;top:1221px;transform:translateY(-50%);font-size:13.5px;color:#424242;text-align:center">동반투자조건</div>
<div class="a" style="left:665px;top:1208px;width:73px;height:26px;background:#e2efda;border-radius:3px"></div>
<div class="a" style="left:665px;width:73px;top:1221px;transform:translateY(-50%);font-size:13.5px;color:#424242;text-align:center">회사 정보</div>
<div class="a" style="left:8px;top:1206px;width:96px;height:30px;background:#f3f3f3;box-shadow:1px 0 2px rgba(0,0,0,.12)"></div>
<svg style="left:20px;top:1215px" width="7" height="12"><path d="M6 1 L1 6 L6 11" fill="none" stroke="#424242" stroke-width="1.1"/></svg>
<svg style="left:53px;top:1215px" width="7" height="12"><path d="M1 1 L6 6 L1 11" fill="none" stroke="#a0a0a0" stroke-width="1.1"/></svg>
<svg style="left:82px;top:1215px" width="13" height="11"><path d="M0 1.5 H13 M0 5.5 H13 M0 9.5 H13" stroke="#424242" stroke-width="1"/></svg>
<div class="a" style="left:745px;top:1208px;width:113px;height:26px;background:#eef3ec;border-radius:3px"></div>
<div class="a" style="left:745px;width:113px;top:1221px;transform:translateY(-50%);font-size:13.5px;color:#242424;text-align:center;font-weight:bold">회사 주요연락처</div>
<div class="a" style="left:750px;top:1234px;width:103px;height:3px;background:#107c41"></div>
<div class="a" style="left:4.5px;top:1235px;width:4px;height:2px;background:#fdf5f3"></div>
<div class="a" style="left:3px;top:1228px;width:1.5px;height:9px;background:#86746f"></div>
<div class="a " style="left:871px;transform-origin:left center;top:1221px;transform:translateY(-50%);font-size:18px;color:#424242">+</div>
<div class="a" style="left:47px;top:645px;width:1024px;height:30px;border:4px solid #e31b23"></div>
<div class="a" style="left:1289px;top:757px;width:1245px;height:101px;border:4px solid #e31b23"></div>
<svg style="left:0;top:0" width="2549" height="1237"><line x1="1069" y1="657" x2="1276" y2="774" stroke="#e31b23" stroke-width="5"/><polygon points="1293,781 1272,782 1281,765" fill="#e31b23"/></svg>
</body></html>
